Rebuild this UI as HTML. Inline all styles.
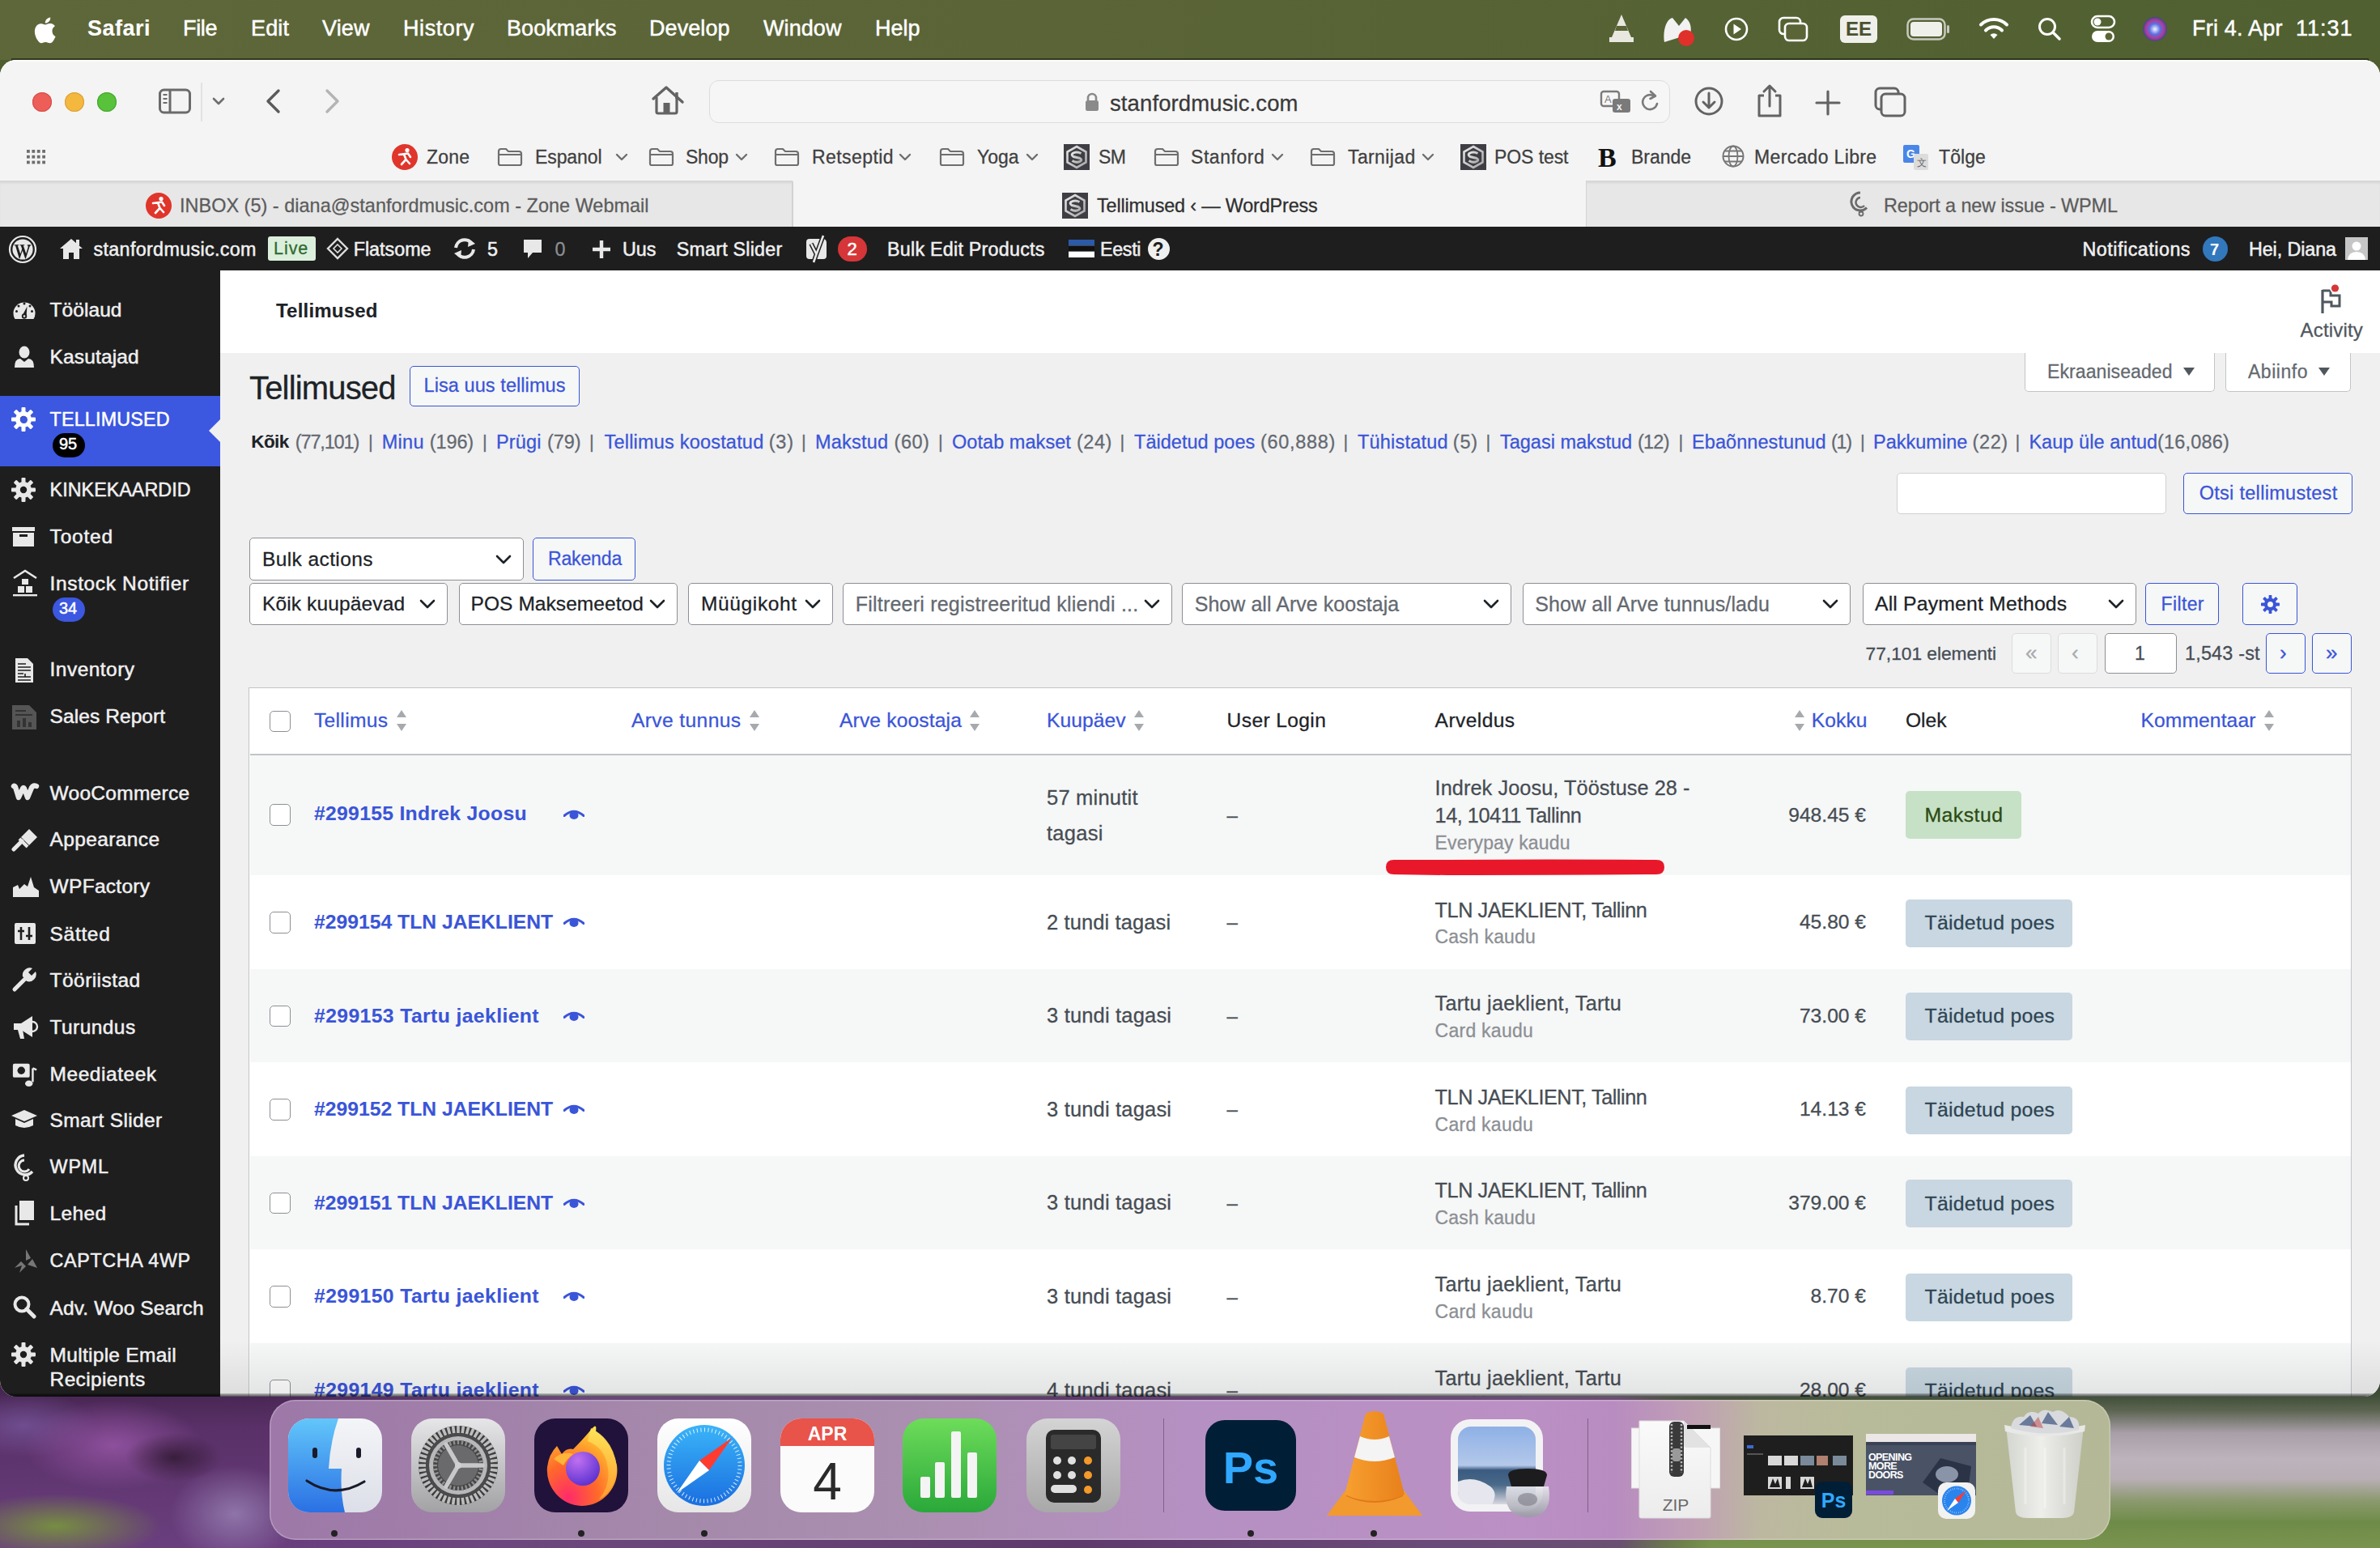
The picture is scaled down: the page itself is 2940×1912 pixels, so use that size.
<!DOCTYPE html><html><head><meta charset="utf-8"><style>
html,body{margin:0;padding:0;width:2940px;height:1912px;overflow:hidden;background:#000}
.r{position:absolute;display:block}
.t{position:absolute;white-space:nowrap;line-height:1;font-family:"Liberation Sans",sans-serif;-webkit-text-stroke:0.28px currentColor}
#root{position:relative;width:2940px;height:1912px;overflow:hidden}
</style></head><body><div id="root">
<div class="r" style="left:0.0px;top:0.0px;width:2940.0px;height:1912.0px;background:#4f5d2e"></div>
<div class="r" style="left:0.0px;top:1690.0px;width:2940.0px;height:222.0px;background:linear-gradient(90deg,#5c3468 0%,#6a3f7c 8%,#6e4a80 20%,#5e3a6c 45%,#6a4a78 60%,#6a4f72 68%,#5a5a4a 71%,#4d6a3a 74%,#557540 100%)"></div>
<div class="r" style="left:0.0px;top:1700.0px;width:720.0px;height:212.0px;background:radial-gradient(ellipse 60px 30px at 215px 100px,rgba(40,20,40,0.75) 0%,rgba(40,20,40,0) 100%),radial-gradient(ellipse 110px 55px at 140px 85px,rgba(150,85,165,0.85) 0%,rgba(110,60,125,0) 100%),radial-gradient(ellipse 130px 40px at 70px 185px,rgba(120,150,60,0.9) 0%,rgba(125,154,58,0) 100%),radial-gradient(ellipse 80px 60px at 290px 170px,rgba(160,140,190,0.7) 0%,rgba(138,120,168,0) 100%),radial-gradient(ellipse 90px 40px at 30px 60px,rgba(120,90,160,0.7) 0%,rgba(120,90,160,0) 100%),linear-gradient(180deg,#3e2248 0%,#5a3068 30%,#6a3f7e 100%);-webkit-mask-image:linear-gradient(90deg,#000 45%,transparent 100%);mask-image:linear-gradient(90deg,#000 45%,transparent 100%)"></div>
<div class="r" style="left:2000.0px;top:1700.0px;width:940.0px;height:212.0px;background:linear-gradient(180deg,#34402a 0%,#42503a 12%,#5d6552 20%,#a89fa8 33%,#bdb3bd 48%,#b8aeb4 60%,#8d9a70 72%,#6e8b48 85%,#7a944e 100%);-webkit-mask-image:linear-gradient(90deg,transparent 0%,#000 12%);mask-image:linear-gradient(90deg,transparent 0%,#000 12%)"></div>
<div class="r" style="left:0.0px;top:0.0px;width:2940.0px;height:74.0px;background:linear-gradient(90deg,#5e6739 0%,#5a6437 45%,#506030 100%)"></div>
<svg class="r" style="left:40.0px;top:20.0px;" width="30" height="34" viewBox="0 0 30 34"><path fill="#fff" d="M24.5 18.2c0-4 3.3-5.9 3.4-6-1.9-2.7-4.8-3.1-5.8-3.1-2.5-.3-4.8 1.4-6.1 1.4-1.3 0-3.2-1.4-5.2-1.3-2.7 0-5.2 1.6-6.6 4-2.8 4.9-.7 12.1 2 16.1 1.3 1.9 2.9 4.1 5 4 2-.1 2.8-1.3 5.2-1.3s3.1 1.3 5.2 1.3c2.2 0 3.5-2 4.8-3.9 1.5-2.2 2.1-4.3 2.2-4.4-.1 0-4.1-1.6-4.1-6.8zM20.6 6.4c1.1-1.3 1.9-3.2 1.6-5-1.6.1-3.5 1.1-4.7 2.4-1 1.1-1.9 3-1.7 4.8 1.8.1 3.6-.9 4.8-2.2z"/></svg>
<div class="t" style="left:108.0px;top:21.8px;font-size:27px;color:#fff;font-weight:700;-webkit-text-stroke:0.1px currentColor;letter-spacing:0.49px;">Safari</div>
<div class="t" style="left:226.0px;top:21.8px;font-size:27px;color:#fff;-webkit-text-stroke:0.5px currentColor;letter-spacing:-0.34px;">File</div>
<div class="t" style="left:310.0px;top:21.8px;font-size:27px;color:#fff;-webkit-text-stroke:0.5px currentColor;letter-spacing:0.16px;">Edit</div>
<div class="t" style="left:398.0px;top:21.8px;font-size:27px;color:#fff;-webkit-text-stroke:0.5px currentColor;letter-spacing:0.15px;">View</div>
<div class="t" style="left:498.0px;top:21.8px;font-size:27px;color:#fff;-webkit-text-stroke:0.5px currentColor;letter-spacing:0.58px;">History</div>
<div class="t" style="left:626.0px;top:21.8px;font-size:27px;color:#fff;-webkit-text-stroke:0.5px currentColor;letter-spacing:0.06px;">Bookmarks</div>
<div class="t" style="left:802.0px;top:21.8px;font-size:27px;color:#fff;-webkit-text-stroke:0.5px currentColor;letter-spacing:0.07px;">Develop</div>
<div class="t" style="left:943.0px;top:21.8px;font-size:27px;color:#fff;-webkit-text-stroke:0.5px currentColor;letter-spacing:0.09px;">Window</div>
<div class="t" style="left:1081.0px;top:21.8px;font-size:27px;color:#fff;-webkit-text-stroke:0.5px currentColor;letter-spacing:-0.01px;">Help</div>
<div class="t" style="left:2708.0px;top:21.8px;font-size:27px;color:#fff;-webkit-text-stroke:0.5px currentColor;letter-spacing:0.22px;">Fri 4. Apr</div>
<div class="t" style="left:2836.0px;top:21.8px;font-size:27px;color:#fff;-webkit-text-stroke:0.5px currentColor;letter-spacing:0.98px;">11:31</div>
<svg class="r" style="left:1986.0px;top:16.0px;" width="34" height="38" viewBox="0 0 34 38"><path d="M17 2 L5 30 L29 30 Z" fill="#e8e8e0"/><path d="M11 16h12l2 6H9z" fill="#5a6437"/><path d="M2 30h30v6H2z" fill="#e8e8e0"/></svg>
<svg class="r" style="left:2052.0px;top:18.0px;" width="44" height="40" viewBox="0 0 44 40"><path d="M4 34 C2 20 6 6 14 4 L22 14 L30 4 C36 8 38 16 36 24 Z" fill="#f2f2f2"/><circle cx="31" cy="29" r="10" fill="#e0302a"/></svg>
<svg class="r" style="left:2129.0px;top:20.0px;" width="32" height="32" viewBox="0 0 32 32"><circle cx="16" cy="16" r="13" fill="none" stroke="#fff" stroke-width="2.6"/><path d="M12.5 9.5 L22 16 L12.5 22.5Z" fill="#fff"/></svg>
<svg class="r" style="left:2196.0px;top:20.0px;" width="38" height="32" viewBox="0 0 38 32"><rect x="2" y="2" width="26" height="20" rx="5" fill="none" stroke="#fff" stroke-width="2.6"/><rect x="9" y="9" width="27" height="21" rx="5" fill="#5a6437" stroke="#fff" stroke-width="2.6"/></svg>
<div class="r" style="left:2273.0px;top:19.0px;width:46.0px;height:34.0px;background:#f0f0ea;border-radius:6px"></div>
<div class="t" style="left:2280.0px;top:24.2px;font-size:24px;color:#4a5230;font-weight:700;-webkit-text-stroke:0.1px currentColor;">EE</div>
<svg class="r" style="left:2355.0px;top:22.0px;" width="54" height="28" viewBox="0 0 54 28"><rect x="1.5" y="1.5" width="46" height="25" rx="7" fill="none" stroke="#c8c8c0" stroke-width="2.5"/><rect x="5" y="5" width="39" height="18" rx="4" fill="#f0f0ea"/><rect x="50" y="9" width="3" height="10" rx="1.5" fill="#c8c8c0"/></svg>
<svg class="r" style="left:2444.0px;top:20.0px;" width="38" height="32" viewBox="0 0 38 32"><path d="M19 28 l-4.5-5 a7 7 0 0 1 9 0z" fill="#fff"/><path d="M9 17.5 a14 14 0 0 1 20 0" fill="none" stroke="#fff" stroke-width="4" stroke-linecap="round"/><path d="M3 10.5 a23 23 0 0 1 32 0" fill="none" stroke="#fff" stroke-width="4" stroke-linecap="round"/></svg>
<svg class="r" style="left:2517.0px;top:20.0px;" width="30" height="32" viewBox="0 0 30 32"><circle cx="12" cy="13" r="9.5" fill="none" stroke="#fff" stroke-width="3"/><path d="M19 20 L27 28" stroke="#fff" stroke-width="3.4" stroke-linecap="round"/></svg>
<svg class="r" style="left:2582.0px;top:18.0px;" width="32" height="36" viewBox="0 0 32 36"><rect x="2" y="2" width="28" height="14" rx="7" fill="none" stroke="#fff" stroke-width="2.6"/><circle cx="9" cy="9" r="4.5" fill="#fff"/><rect x="2" y="20" width="28" height="14" rx="7" fill="#fff"/><circle cx="23" cy="27" r="4.5" fill="#5a6437"/></svg>
<svg class="r" style="left:2646.0px;top:20.0px;" width="32" height="32" viewBox="0 0 32 32"><defs><radialGradient id="siri" cx="50%" cy="50%" r="50%"><stop offset="0" stop-color="#f5f5ff"/><stop offset=".45" stop-color="#5a6fe0"/><stop offset=".75" stop-color="#b03a9a"/><stop offset="1" stop-color="#3a4a8a"/></radialGradient></defs><circle cx="16" cy="16" r="15" fill="url(#siri)"/></svg>
<div class="r" style="left:0;top:74px;width:2940px;height:1651px;border-radius:20px;overflow:hidden;background:#f0f0f1">
</div>
<div class="r" style="left:14.0px;top:72.0px;width:2912.0px;height:2.5px;background:rgba(15,20,8,0.55)"></div>
<div class="r" style="left:0;top:0;width:2940px;height:1912px;clip-path:inset(74px 0px 187px 0px round 20px);">
<div class="r" style="left:0.0px;top:74.0px;width:2940.0px;height:1651.0px;background:#f0f0f1"></div>
<div class="r" style="left:0.0px;top:74.0px;width:2940.0px;height:150.0px;background:#f4f4f4"></div>
<div class="r" style="left:0.0px;top:74.0px;width:2940.0px;height:2.0px;background:#fbfbfb"></div>
<div class="r" style="left:0.0px;top:223.0px;width:979.0px;height:1.2px;background:#d6d6d6"></div>
<div class="r" style="left:1959.0px;top:223.0px;width:981.0px;height:1.2px;background:#d6d6d6"></div>
<div class="r" style="left:40px;top:114px;width:24px;height:24px;border-radius:50%;background:#ee5e58;box-shadow:inset 0 0 0 1.2px #d8504a"></div>
<div class="r" style="left:80px;top:114px;width:24px;height:24px;border-radius:50%;background:#f5b83f;box-shadow:inset 0 0 0 1.2px #dba23a"></div>
<div class="r" style="left:120px;top:114px;width:24px;height:24px;border-radius:50%;background:#57c23a;box-shadow:inset 0 0 0 1.2px #4aa832"></div>
<svg class="r" style="left:195.0px;top:108.0px;" width="42" height="34" viewBox="0 0 42 34"><rect x="2.5" y="3" width="37" height="28" rx="5" fill="none" stroke="#6a6a6a" stroke-width="3"/><path d="M15 3v28" stroke="#6a6a6a" stroke-width="3"/><path d="M6.5 9h5M6.5 14h5M6.5 19h5" stroke="#6a6a6a" stroke-width="2.2"/></svg>
<div class="r" style="left:248.0px;top:102.0px;width:1.5px;height:48.0px;background:#e2e2e2"></div>
<svg class="r" style="left:261.0px;top:118.0px;" width="18" height="14" viewBox="0 0 18 14"><path d="M3 4 L9 10 L15 4" fill="none" stroke="#6e6e6e" stroke-width="2.6" stroke-linecap="round" stroke-linejoin="round"/></svg>
<svg class="r" style="left:324.0px;top:108.0px;" width="28" height="34" viewBox="0 0 28 34"><path d="M20 4 L7 17 L20 30" fill="none" stroke="#5a5a5a" stroke-width="3.4" stroke-linecap="round" stroke-linejoin="round"/></svg>
<svg class="r" style="left:396.0px;top:108.0px;" width="28" height="34" viewBox="0 0 28 34"><path d="M8 4 L21 17 L8 30" fill="none" stroke="#b4b4b4" stroke-width="3.4" stroke-linecap="round" stroke-linejoin="round"/></svg>
<svg class="r" style="left:803.0px;top:104.0px;" width="44" height="40" viewBox="0 0 44 40"><path d="M4 18 L20 4 L40 22" fill="none" stroke="#636363" stroke-width="3.4" stroke-linecap="round" stroke-linejoin="round"/><path d="M8 16 V34 Q8 36 10 36 H31 Q33 36 33 34 V16" fill="none" stroke="#636363" stroke-width="3.2"/><rect x="16.5" y="23" width="8" height="13" fill="#636363"/><path d="M33 10 V18" stroke="#636363" stroke-width="3.4"/></svg>
<div class="r" style="left:876.0px;top:99.0px;width:1187.0px;height:53.0px;border:1.5px solid #dcdcdc;border-radius:12px;box-sizing:border-box;background:#f6f6f6"></div>
<svg class="r" style="left:1339.0px;top:113.0px;" width="20" height="26" viewBox="0 0 20 26"><path d="M5 11 V8 a5 5 0 0 1 10 0 V11" fill="none" stroke="#8a8a8a" stroke-width="2.6"/><rect x="2" y="11" width="16" height="13" rx="2.5" fill="#8a8a8a"/></svg>
<div class="t" style="left:1371.0px;top:113.5px;font-size:27.5px;color:#3a3a3a;letter-spacing:0.11px;">stanfordmusic.com</div>
<svg class="r" style="left:1976.0px;top:110.0px;" width="42" height="34" viewBox="0 0 42 34"><rect x="2" y="3" width="22" height="18" rx="3" fill="none" stroke="#7a7a7a" stroke-width="2.4"/><text x="6" y="17" font-size="13" font-family="Liberation Sans" fill="#7a7a7a">A</text><rect x="16" y="12" width="22" height="17" rx="3" fill="#7a7a7a"/><text x="21" y="26" font-size="12" font-family="Liberation Sans" font-weight="700" fill="#f6f6f6">x</text></svg>
<svg class="r" style="left:2025.0px;top:110.0px;" width="28" height="32" viewBox="0 0 28 32"><path d="M22 18 a9 9 0 1 1 -4-9.5" fill="none" stroke="#7a7a7a" stroke-width="2.6" stroke-linecap="round"/><path d="M14 3 L20 8.5 L13.5 12" fill="none" stroke="#7a7a7a" stroke-width="2.6" stroke-linecap="round" stroke-linejoin="round"/></svg>
<svg class="r" style="left:2092.0px;top:106.0px;" width="38" height="38" viewBox="0 0 38 38"><circle cx="19" cy="19" r="16" fill="none" stroke="#636363" stroke-width="3"/><path d="M19 9 V27 M12 20 L19 27 L26 20" fill="none" stroke="#636363" stroke-width="3" stroke-linecap="round" stroke-linejoin="round"/></svg>
<svg class="r" style="left:2168.0px;top:102.0px;" width="36" height="44" viewBox="0 0 36 44"><path d="M11 16 H5 V41 H31 V16 H25" fill="none" stroke="#636363" stroke-width="3" stroke-linejoin="round"/><path d="M18 29 V4 M11 11 L18 4 L25 11" fill="none" stroke="#636363" stroke-width="3" stroke-linecap="round" stroke-linejoin="round"/></svg>
<svg class="r" style="left:2241.0px;top:110.0px;" width="34" height="34" viewBox="0 0 34 34"><path d="M17 3 V31 M3 17 H31" stroke="#636363" stroke-width="3.2" stroke-linecap="round"/></svg>
<svg class="r" style="left:2314.0px;top:106.0px;" width="42" height="40" viewBox="0 0 42 40"><rect x="3" y="3" width="28" height="26" rx="5" fill="none" stroke="#636363" stroke-width="3"/><rect x="10" y="10" width="29" height="27" rx="5" fill="#f4f4f4" stroke="#636363" stroke-width="3"/></svg>
<svg class="r" style="left:31.0px;top:184.0px;" width="28" height="22" viewBox="0 0 28 22"><g fill="#6e6e6e"><rect x="2.0" y="1.0" width="3.8" height="3.8"/><rect x="2.0" y="7.8" width="3.8" height="3.8"/><rect x="2.0" y="14.6" width="3.8" height="3.8"/><rect x="8.4" y="1.0" width="3.8" height="3.8"/><rect x="8.4" y="7.8" width="3.8" height="3.8"/><rect x="8.4" y="14.6" width="3.8" height="3.8"/><rect x="14.8" y="1.0" width="3.8" height="3.8"/><rect x="14.8" y="7.8" width="3.8" height="3.8"/><rect x="14.8" y="14.6" width="3.8" height="3.8"/><rect x="21.2" y="1.0" width="3.8" height="3.8"/><rect x="21.2" y="7.8" width="3.8" height="3.8"/><rect x="21.2" y="14.6" width="3.8" height="3.8"/></g></svg>
<svg class="r" style="left:484.0px;top:178.0px;" width="32" height="32" viewBox="0 0 32 32"><circle cx="16" cy="16" r="16" fill="#e0352b"/><circle cx="19" cy="7.5" r="2.6" fill="#fff"/><path d="M9 13 L20 11.5 L23 16 M15 12.5 L17.5 19 L12 25 M17.5 19 L22 24" fill="none" stroke="#fff" stroke-width="2.6" stroke-linecap="round" stroke-linejoin="round"/></svg>
<div class="t" style="left:527.0px;top:182.7px;font-size:23px;color:#404040;letter-spacing:0.22px;">Zone</div>
<svg class="r" style="left:614.0px;top:182.0px;" width="32" height="24" viewBox="0 0 32 24"><path d="M2 5 Q2 2 5 2 H11 L14 5 H27 Q30 5 30 8 V20 Q30 22 28 22 H4 Q2 22 2 20 Z" fill="none" stroke="#6e6e6e" stroke-width="2.2"/><path d="M2 9 H30" stroke="#6e6e6e" stroke-width="2"/></svg>
<div class="t" style="left:661.0px;top:182.7px;font-size:23px;color:#404040;letter-spacing:-0.10px;">Espanol</div>
<svg class="r" style="left:760.0px;top:188.0px;" width="16" height="12" viewBox="0 0 16 12"><path d="M2 3 L8 9 L14 3" fill="none" stroke="#6e6e6e" stroke-width="2.4" stroke-linecap="round" stroke-linejoin="round"/></svg>
<svg class="r" style="left:801.0px;top:182.0px;" width="32" height="24" viewBox="0 0 32 24"><path d="M2 5 Q2 2 5 2 H11 L14 5 H27 Q30 5 30 8 V20 Q30 22 28 22 H4 Q2 22 2 20 Z" fill="none" stroke="#6e6e6e" stroke-width="2.2"/><path d="M2 9 H30" stroke="#6e6e6e" stroke-width="2"/></svg>
<div class="t" style="left:847.0px;top:182.7px;font-size:23px;color:#404040;letter-spacing:-0.24px;">Shop</div>
<svg class="r" style="left:908.0px;top:188.0px;" width="16" height="12" viewBox="0 0 16 12"><path d="M2 3 L8 9 L14 3" fill="none" stroke="#6e6e6e" stroke-width="2.4" stroke-linecap="round" stroke-linejoin="round"/></svg>
<svg class="r" style="left:956.0px;top:182.0px;" width="32" height="24" viewBox="0 0 32 24"><path d="M2 5 Q2 2 5 2 H11 L14 5 H27 Q30 5 30 8 V20 Q30 22 28 22 H4 Q2 22 2 20 Z" fill="none" stroke="#6e6e6e" stroke-width="2.2"/><path d="M2 9 H30" stroke="#6e6e6e" stroke-width="2"/></svg>
<div class="t" style="left:1003.0px;top:182.7px;font-size:23px;color:#404040;letter-spacing:0.42px;">Retseptid</div>
<svg class="r" style="left:1110.0px;top:188.0px;" width="16" height="12" viewBox="0 0 16 12"><path d="M2 3 L8 9 L14 3" fill="none" stroke="#6e6e6e" stroke-width="2.4" stroke-linecap="round" stroke-linejoin="round"/></svg>
<svg class="r" style="left:1160.0px;top:182.0px;" width="32" height="24" viewBox="0 0 32 24"><path d="M2 5 Q2 2 5 2 H11 L14 5 H27 Q30 5 30 8 V20 Q30 22 28 22 H4 Q2 22 2 20 Z" fill="none" stroke="#6e6e6e" stroke-width="2.2"/><path d="M2 9 H30" stroke="#6e6e6e" stroke-width="2"/></svg>
<div class="t" style="left:1207.0px;top:182.7px;font-size:23px;color:#404040;letter-spacing:-0.04px;">Yoga</div>
<svg class="r" style="left:1267.0px;top:188.0px;" width="16" height="12" viewBox="0 0 16 12"><path d="M2 3 L8 9 L14 3" fill="none" stroke="#6e6e6e" stroke-width="2.4" stroke-linecap="round" stroke-linejoin="round"/></svg>
<svg class="r" style="left:1425.0px;top:182.0px;" width="32" height="24" viewBox="0 0 32 24"><path d="M2 5 Q2 2 5 2 H11 L14 5 H27 Q30 5 30 8 V20 Q30 22 28 22 H4 Q2 22 2 20 Z" fill="none" stroke="#6e6e6e" stroke-width="2.2"/><path d="M2 9 H30" stroke="#6e6e6e" stroke-width="2"/></svg>
<div class="t" style="left:1471.0px;top:182.7px;font-size:23px;color:#404040;letter-spacing:0.56px;">Stanford</div>
<svg class="r" style="left:1570.0px;top:188.0px;" width="16" height="12" viewBox="0 0 16 12"><path d="M2 3 L8 9 L14 3" fill="none" stroke="#6e6e6e" stroke-width="2.4" stroke-linecap="round" stroke-linejoin="round"/></svg>
<svg class="r" style="left:1618.0px;top:182.0px;" width="32" height="24" viewBox="0 0 32 24"><path d="M2 5 Q2 2 5 2 H11 L14 5 H27 Q30 5 30 8 V20 Q30 22 28 22 H4 Q2 22 2 20 Z" fill="none" stroke="#6e6e6e" stroke-width="2.2"/><path d="M2 9 H30" stroke="#6e6e6e" stroke-width="2"/></svg>
<div class="t" style="left:1665.0px;top:182.7px;font-size:23px;color:#404040;letter-spacing:0.39px;">Tarnijad</div>
<svg class="r" style="left:1756.0px;top:188.0px;" width="16" height="12" viewBox="0 0 16 12"><path d="M2 3 L8 9 L14 3" fill="none" stroke="#6e6e6e" stroke-width="2.4" stroke-linecap="round" stroke-linejoin="round"/></svg>
<svg class="r" style="left:1314.0px;top:178.0px;" width="32" height="32" viewBox="0 0 32 32"><defs><linearGradient id="smg" x1="0" y1="0" x2="1" y2="1"><stop offset="0" stop-color="#e8e8e8"/><stop offset="1" stop-color="#a8a8a8"/></linearGradient></defs><rect width="32" height="32" fill="#3e3e44"/><path d="M16 3 L27.5 9.5 V22.5 L16 29 L4.5 22.5 V9.5 Z" fill="none" stroke="url(#smg)" stroke-width="2.6"/><path d="M21.5 11.5 Q16 8.5 11 11.5 Q9 13.5 12 15.5 L20 17.5 Q23 19 21 21 Q16 24 10.5 20.5" fill="none" stroke="url(#smg)" stroke-width="3"/></svg>
<div class="t" style="left:1357.0px;top:182.7px;font-size:23px;color:#404040;letter-spacing:-0.70px;">SM</div>
<svg class="r" style="left:1804.0px;top:178.0px;" width="32" height="32" viewBox="0 0 32 32"><defs><linearGradient id="smg" x1="0" y1="0" x2="1" y2="1"><stop offset="0" stop-color="#e8e8e8"/><stop offset="1" stop-color="#a8a8a8"/></linearGradient></defs><rect width="32" height="32" fill="#3e3e44"/><path d="M16 3 L27.5 9.5 V22.5 L16 29 L4.5 22.5 V9.5 Z" fill="none" stroke="url(#smg)" stroke-width="2.6"/><path d="M21.5 11.5 Q16 8.5 11 11.5 Q9 13.5 12 15.5 L20 17.5 Q23 19 21 21 Q16 24 10.5 20.5" fill="none" stroke="url(#smg)" stroke-width="3"/></svg>
<div class="t" style="left:1846.0px;top:182.7px;font-size:23px;color:#404040;letter-spacing:-0.08px;">POS test</div>
<div class="t" style="left:1974.0px;top:178.3px;font-size:34px;color:#111;font-weight:700;-webkit-text-stroke:0.1px currentColor;font-family:'Liberation Serif';">B</div>
<div class="t" style="left:2015.0px;top:182.7px;font-size:23px;color:#404040;letter-spacing:-0.03px;">Brande</div>
<svg class="r" style="left:2126.0px;top:178.0px;" width="30" height="30" viewBox="0 0 30 30"><circle cx="15" cy="15" r="12.5" fill="none" stroke="#777" stroke-width="2"/><ellipse cx="15" cy="15" rx="5.5" ry="12.5" fill="none" stroke="#777" stroke-width="1.8"/><path d="M2.5 15H27.5M5 8.5H25M5 21.5H25" stroke="#777" stroke-width="1.8"/></svg>
<div class="t" style="left:2167.0px;top:182.7px;font-size:23px;color:#404040;letter-spacing:0.34px;">Mercado Libre</div>
<svg class="r" style="left:2350.0px;top:178.0px;" width="36" height="34" viewBox="0 0 36 34"><rect x="1" y="1" width="20" height="22" rx="2" fill="#4a86e8"/><text x="5" y="17" font-size="14" font-family="Liberation Sans" font-weight="700" fill="#fff">G</text><rect x="14" y="12" width="18" height="20" rx="2" fill="#dcdcdc"/><text x="18" y="27" font-size="12" font-family="Liberation Sans" fill="#666">文</text></svg>
<div class="t" style="left:2395.0px;top:182.7px;font-size:23px;color:#404040;letter-spacing:0.09px;">Tõlge</div>
<div class="r" style="left:0.0px;top:224.0px;width:2940.0px;height:56.0px;background:#e4e4e4"></div>
<div class="r" style="left:0.0px;top:224.0px;width:979.0px;height:56.0px;background:#e7e7e7;box-shadow:inset 0 3px 3px -1px rgba(0,0,0,0.08)"></div>
<div class="r" style="left:979.0px;top:224.0px;width:980.0px;height:56.0px;background:#f4f4f4"></div>
<div class="r" style="left:1959.0px;top:224.0px;width:981.0px;height:56.0px;background:#e7e7e7;box-shadow:inset 0 3px 3px -1px rgba(0,0,0,0.08)"></div>
<div class="r" style="left:978.0px;top:224.0px;width:1.5px;height:56.0px;background:#d2d2d2"></div>
<div class="r" style="left:1958.5px;top:224.0px;width:1.5px;height:56.0px;background:#d2d2d2"></div>
<svg class="r" style="left:180.0px;top:238.0px;" width="32" height="32" viewBox="0 0 32 32"><circle cx="16" cy="16" r="16" fill="#e0352b"/><circle cx="19" cy="7.5" r="2.6" fill="#fff"/><path d="M9 13 L20 11.5 L23 16 M15 12.5 L17.5 19 L12 25 M17.5 19 L22 24" fill="none" stroke="#fff" stroke-width="2.6" stroke-linecap="round" stroke-linejoin="round"/></svg>
<div class="t" style="left:222.0px;top:242.5px;font-size:23.4px;color:#5c5c5c;letter-spacing:0.05px;">INBOX (5) - diana@stanfordmusic.com - Zone Webmail</div>
<svg class="r" style="left:1312.0px;top:238.0px;" width="32" height="32" viewBox="0 0 32 32"><defs><linearGradient id="smg" x1="0" y1="0" x2="1" y2="1"><stop offset="0" stop-color="#e8e8e8"/><stop offset="1" stop-color="#a8a8a8"/></linearGradient></defs><rect width="32" height="32" fill="#3e3e44"/><path d="M16 3 L27.5 9.5 V22.5 L16 29 L4.5 22.5 V9.5 Z" fill="none" stroke="url(#smg)" stroke-width="2.6"/><path d="M21.5 11.5 Q16 8.5 11 11.5 Q9 13.5 12 15.5 L20 17.5 Q23 19 21 21 Q16 24 10.5 20.5" fill="none" stroke="url(#smg)" stroke-width="3"/></svg>
<div class="t" style="left:1355.0px;top:242.5px;font-size:23.4px;color:#2f2f2f;letter-spacing:-0.16px;">Tellimused ‹ — WordPress</div>
<svg class="r" style="left:2285.0px;top:236.0px;" width="26" height="32" viewBox="0 0 26 32"><path d="M13 2 a11 11 0 1 0 8 18.5" fill="none" stroke="#6a6a6a" stroke-width="3"/><path d="M13 8 a6 6 0 1 0 5 10" fill="none" stroke="#6a6a6a" stroke-width="2.5"/><circle cx="14" cy="28" r="2.5" fill="none" stroke="#6a6a6a" stroke-width="1.8"/></svg>
<div class="t" style="left:2327.0px;top:242.5px;font-size:23.4px;color:#5c5c5c;letter-spacing:-0.09px;">Report a new issue - WPML</div>
<div class="r" style="left:0.0px;top:280.0px;width:2940.0px;height:54.0px;background:#1e1e1e"></div>
<svg class="r" style="left:10.0px;top:290.0px;" width="36" height="36" viewBox="0 0 36 36"><circle cx="18" cy="18" r="16" fill="none" stroke="#e8e8e8" stroke-width="2.2"/><circle cx="18" cy="18" r="12.6" fill="#e8e8e8"/><path d="M7.5 12.2 H13.2 V13.2 H11.8 L15.2 23.5 L17.2 17.5 L15.8 13.2 H14.6 V12.2 H20.2 V13.2 H18.8 L22.2 23.2 L24.6 15.5 Q25.2 13.2 23.8 13.2 V12.2 H28.2 V13.2 Q27 13.2 26.4 15 L21.8 29.6 H21.2 L17.8 19.6 L14.4 29.6 H13.8 L9 13.2 H7.5 Z" fill="#1e1e1e"/></svg>
<svg class="r" style="left:72.0px;top:292.0px;" width="32" height="30" viewBox="0 0 32 30"><path d="M16 3 L2 15 H6 V28 H13 V20 H19 V28 H26 V15 H30 Z" fill="#e8e8e8"/><rect x="22" y="4" width="4" height="7" fill="#e8e8e8"/></svg>
<div class="t" style="left:115.5px;top:297.1px;font-size:23.3px;color:#f0f0f1;-webkit-text-stroke:0.5px currentColor;letter-spacing:0.34px;">stanfordmusic.com</div>
<div class="r" style="left:330.5px;top:291.5px;width:59.5px;height:30.0px;background:#dcefdc;border-radius:3px"></div>
<div class="t" style="left:338.0px;top:296.5px;font-size:21.5px;color:#2e6b30;letter-spacing:0.95px;">Live</div>
<svg class="r" style="left:403.0px;top:293.0px;" width="28" height="28" viewBox="0 0 28 28"><path d="M14 2 L26 14 L14 26 L2 14 Z" fill="none" stroke="#ddd" stroke-width="2.4"/><path d="M14 9 L19 14 L14 19 L9 14 Z" fill="none" stroke="#ddd" stroke-width="1.6"/></svg>
<div class="t" style="left:436.7px;top:297.1px;font-size:23.3px;color:#f0f0f1;-webkit-text-stroke:0.5px currentColor;letter-spacing:-0.00px;">Flatsome</div>
<svg class="r" style="left:557.0px;top:292.0px;" width="34" height="30" viewBox="0 0 34 30"><path d="M6 14 a11 11 0 0 1 20-5" fill="none" stroke="#e8e8e8" stroke-width="4"/><path d="M22 3 L30 9 L21 13Z" fill="#e8e8e8"/><path d="M28 16 a11 11 0 0 1 -20 5" fill="none" stroke="#e8e8e8" stroke-width="4"/><path d="M12 27 L4 21 L13 17Z" fill="#e8e8e8"/></svg>
<div class="t" style="left:602.0px;top:297.1px;font-size:23.3px;color:#f0f0f1;-webkit-text-stroke:0.5px currentColor;">5</div>
<svg class="r" style="left:644.0px;top:293.0px;" width="28" height="30" viewBox="0 0 28 30"><path d="M3 3 H25 V19 H14 L8 26 V19 H3 Z" fill="#e8e8e8" stroke-linejoin="round"/></svg>
<div class="t" style="left:685.6px;top:297.1px;font-size:23.3px;color:#8c8f94;">0</div>
<svg class="r" style="left:729.0px;top:295.0px;" width="28" height="26" viewBox="0 0 28 26"><path d="M14 2 V24 M3 13 H25" stroke="#e8e8e8" stroke-width="4.4"/></svg>
<div class="t" style="left:769.0px;top:297.1px;font-size:23.3px;color:#f0f0f1;-webkit-text-stroke:0.5px currentColor;letter-spacing:0.03px;">Uus</div>
<div class="t" style="left:835.7px;top:297.1px;font-size:23.3px;color:#f0f0f1;-webkit-text-stroke:0.5px currentColor;letter-spacing:0.21px;">Smart Slider</div>
<svg class="r" style="left:993.0px;top:289.0px;" width="32" height="40" viewBox="0 0 32 40"><path d="M3 10 Q3 6 7 6 H23 Q28 6 28 11 V27 Q28 31 24 31 H7 Q3 31 3 27 Z" fill="#e8e8e8"/><path d="M9 12 L15.5 25 L12 35 M15.5 25 L24 2" fill="none" stroke="#1e1e1e" stroke-width="5.5" stroke-linejoin="round"/><path d="M9 12 L15.5 25 L12 35 M15.5 25 L24 2" fill="none" stroke="#e8e8e8" stroke-width="2.6" stroke-linejoin="round"/></svg>
<div class="r" style="left:1035.0px;top:292.0px;width:36.0px;height:31.0px;background:#d63638;border-radius:16px"></div>
<div class="t" style="left:1046.5px;top:297.2px;font-size:22px;color:#fff;-webkit-text-stroke:0.5px currentColor;">2</div>
<div class="t" style="left:1096.0px;top:297.1px;font-size:23.3px;color:#f0f0f1;-webkit-text-stroke:0.5px currentColor;letter-spacing:0.24px;">Bulk Edit Products</div>
<svg class="r" style="left:1320.0px;top:296.0px;" width="32" height="22" viewBox="0 0 32 22"><rect width="32" height="22" fill="#fff"/><rect y="0" width="32" height="7.3" fill="#2a5aa8"/><rect y="7.3" width="32" height="7.3" fill="#111"/></svg>
<div class="t" style="left:1359.0px;top:297.1px;font-size:23.3px;color:#f0f0f1;-webkit-text-stroke:0.5px currentColor;letter-spacing:-0.32px;">Eesti</div>
<div class="r" style="left:1417.5px;top:294.0px;width:27.0px;height:27.0px;background:#f0f0f0;border-radius:50%"></div>
<div class="t" style="left:1423.5px;top:296.7px;font-size:23px;color:#1e1e1e;font-weight:700;-webkit-text-stroke:0.1px currentColor;">?</div>
<div class="t" style="left:2572.5px;top:297.1px;font-size:23.3px;color:#f0f0f1;-webkit-text-stroke:0.5px currentColor;letter-spacing:0.51px;">Notifications</div>
<div class="r" style="left:2721.0px;top:292.0px;width:31.0px;height:31.0px;background:#3278bd;border-radius:50%"></div>
<div class="t" style="left:2730.0px;top:298.2px;font-size:20px;color:#fff;font-weight:700;-webkit-text-stroke:0.1px currentColor;">7</div>
<div class="t" style="left:2778.0px;top:297.1px;font-size:23.3px;color:#f0f0f1;-webkit-text-stroke:0.5px currentColor;letter-spacing:-0.09px;">Hei, Diana</div>
<div class="r" style="left:2897.0px;top:293.0px;width:28.0px;height:28.0px;background:#c6c6c6"></div>
<svg class="r" style="left:2897.0px;top:293.0px;" width="28" height="28" viewBox="0 0 28 28"><circle cx="14" cy="11" r="5.5" fill="#fff"/><path d="M3 28 Q4 18 14 18 Q24 18 25 28Z" fill="#fff"/></svg>
<div class="r" style="left:0.0px;top:334.0px;width:272.0px;height:1391.0px;background:#1e1e1e"></div>
<div class="r" style="left:0.0px;top:489.0px;width:272.0px;height:87.0px;background:#3c57e0"></div>
<svg class="r" style="left:258.0px;top:518.0px;" width="14" height="28" viewBox="0 0 14 28"><path d="M14 0 L0 14 L14 28Z" fill="#f0f0f1"/></svg>
<div class="t" style="left:61.6px;top:371.0px;font-size:24.5px;color:#f0f0f1;-webkit-text-stroke:0.5px currentColor;letter-spacing:0.06px;">Töölaud</div>
<div class="t" style="left:61.6px;top:429.0px;font-size:24.5px;color:#f0f0f1;-webkit-text-stroke:0.5px currentColor;letter-spacing:0.14px;">Kasutajad</div>
<div class="t" style="left:61.6px;top:506.6px;font-size:23.3px;color:#fff;-webkit-text-stroke:0.5px currentColor;letter-spacing:0.18px;">TELLIMUSED</div>
<div class="t" style="left:61.6px;top:593.6px;font-size:23.3px;color:#f0f0f1;-webkit-text-stroke:0.5px currentColor;letter-spacing:0.04px;">KINKEKAARDID</div>
<div class="t" style="left:61.6px;top:651.4px;font-size:24.5px;color:#f0f0f1;-webkit-text-stroke:0.5px currentColor;letter-spacing:0.79px;">Tooted</div>
<div class="t" style="left:61.6px;top:708.6px;font-size:24.5px;color:#f0f0f1;-webkit-text-stroke:0.5px currentColor;letter-spacing:0.63px;">Instock Notifier</div>
<div class="t" style="left:61.6px;top:815.0px;font-size:24.5px;color:#f0f0f1;-webkit-text-stroke:0.5px currentColor;letter-spacing:0.46px;">Inventory</div>
<div class="t" style="left:61.6px;top:873.2px;font-size:24.5px;color:#f0f0f1;-webkit-text-stroke:0.5px currentColor;letter-spacing:0.08px;">Sales Report</div>
<div class="t" style="left:61.6px;top:968.0px;font-size:24.5px;color:#f0f0f1;-webkit-text-stroke:0.5px currentColor;letter-spacing:0.28px;">WooCommerce</div>
<div class="t" style="left:61.6px;top:1025.4px;font-size:24.5px;color:#f0f0f1;-webkit-text-stroke:0.5px currentColor;letter-spacing:0.37px;">Appearance</div>
<div class="t" style="left:61.6px;top:1083.4px;font-size:24.5px;color:#f0f0f1;-webkit-text-stroke:0.5px currentColor;letter-spacing:0.29px;">WPFactory</div>
<div class="t" style="left:61.6px;top:1141.5px;font-size:24.5px;color:#f0f0f1;-webkit-text-stroke:0.5px currentColor;letter-spacing:0.67px;">Sätted</div>
<div class="t" style="left:61.6px;top:1198.5px;font-size:24.5px;color:#f0f0f1;-webkit-text-stroke:0.5px currentColor;letter-spacing:0.44px;">Tööriistad</div>
<div class="t" style="left:61.6px;top:1256.6px;font-size:24.5px;color:#f0f0f1;-webkit-text-stroke:0.5px currentColor;letter-spacing:0.42px;">Turundus</div>
<div class="t" style="left:61.6px;top:1314.7px;font-size:24.5px;color:#f0f0f1;-webkit-text-stroke:0.5px currentColor;letter-spacing:0.54px;">Meediateek</div>
<div class="t" style="left:61.6px;top:1372.3px;font-size:24.5px;color:#f0f0f1;-webkit-text-stroke:0.5px currentColor;letter-spacing:0.34px;">Smart Slider</div>
<div class="t" style="left:61.6px;top:1429.9px;font-size:23.3px;color:#f0f0f1;-webkit-text-stroke:0.5px currentColor;letter-spacing:0.86px;">WPML</div>
<div class="t" style="left:61.6px;top:1487.3px;font-size:24.5px;color:#f0f0f1;-webkit-text-stroke:0.5px currentColor;letter-spacing:0.34px;">Lehed</div>
<div class="t" style="left:61.6px;top:1546.0px;font-size:23.3px;color:#f0f0f1;-webkit-text-stroke:0.5px currentColor;letter-spacing:0.65px;">CAPTCHA 4WP</div>
<div class="t" style="left:61.6px;top:1603.5px;font-size:24.5px;color:#f0f0f1;-webkit-text-stroke:0.5px currentColor;letter-spacing:0.11px;">Adv. Woo Search</div>
<div class="t" style="left:61.6px;top:1661.6px;font-size:24.5px;color:#f0f0f1;-webkit-text-stroke:0.5px currentColor;letter-spacing:0.28px;">Multiple Email</div>
<div class="t" style="left:61.6px;top:1691.5px;font-size:24.5px;color:#f0f0f1;-webkit-text-stroke:0.5px currentColor;letter-spacing:0.35px;">Recipients</div>
<div class="r" style="left:65.4px;top:534.5px;width:40.0px;height:30.0px;background:#000;border-radius:15px"></div>
<div class="t" style="left:73.0px;top:538.2px;font-size:20px;color:#fff;-webkit-text-stroke:0.5px currentColor;">95</div>
<div class="r" style="left:65.4px;top:737.5px;width:40.0px;height:30.0px;background:#3c57e0;border-radius:15px"></div>
<div class="t" style="left:73.0px;top:741.2px;font-size:20px;color:#fff;-webkit-text-stroke:0.5px currentColor;">34</div>
<svg class="r" style="left:16.0px;top:370.0px;" width="28" height="26" viewBox="0 0 28 26"><path d="M2.5 24 A13.5 13.5 0 1 1 25.5 24 Z" fill="#e8e8e8"/><g fill="#1e1e1e"><circle cx="14" cy="5" r="1.5"/><circle cx="7" cy="8" r="1.5"/><circle cx="21" cy="8" r="1.5"/><circle cx="4.5" cy="14.5" r="1.5"/><circle cx="23.5" cy="14.5" r="1.5"/><path d="M11.5 20 L17.5 8.5 L16.5 21Z"/><circle cx="14" cy="20.5" r="3.2"/></g><circle cx="14" cy="20.5" r="1.3" fill="#e8e8e8"/></svg>
<svg class="r" style="left:17.0px;top:427.0px;" width="26" height="28" viewBox="0 0 26 28"><ellipse cx="13" cy="8" rx="6.5" ry="7.5" fill="#e8e8e8"/><path d="M1 27 Q1 16 8 16 L13 20 L18 16 Q25 16 25 27Z" fill="#e8e8e8"/></svg>
<svg class="r" style="left:14.0px;top:503.0px;" width="30" height="30" viewBox="0 0 30 30"><g fill="#fff"><rect x="12.5" y="0" width="5" height="8" rx="1" transform="rotate(0 15 15)"/><rect x="12.5" y="0" width="5" height="8" rx="1" transform="rotate(45 15 15)"/><rect x="12.5" y="0" width="5" height="8" rx="1" transform="rotate(90 15 15)"/><rect x="12.5" y="0" width="5" height="8" rx="1" transform="rotate(135 15 15)"/><rect x="12.5" y="0" width="5" height="8" rx="1" transform="rotate(180 15 15)"/><rect x="12.5" y="0" width="5" height="8" rx="1" transform="rotate(225 15 15)"/><rect x="12.5" y="0" width="5" height="8" rx="1" transform="rotate(270 15 15)"/><rect x="12.5" y="0" width="5" height="8" rx="1" transform="rotate(315 15 15)"/><circle cx="15" cy="15" r="10"/></g><circle cx="15" cy="15" r="4.2" fill="#1e1e1e"/></svg>
<div class="r" style="left:24.5px;top:513.5px;width:9.0px;height:9.0px;background:#3c57e0;border-radius:50%"></div>
<svg class="r" style="left:14.0px;top:590.0px;" width="30" height="30" viewBox="0 0 30 30"><g fill="#e8e8e8"><rect x="12.5" y="0" width="5" height="8" rx="1" transform="rotate(0 15 15)"/><rect x="12.5" y="0" width="5" height="8" rx="1" transform="rotate(45 15 15)"/><rect x="12.5" y="0" width="5" height="8" rx="1" transform="rotate(90 15 15)"/><rect x="12.5" y="0" width="5" height="8" rx="1" transform="rotate(135 15 15)"/><rect x="12.5" y="0" width="5" height="8" rx="1" transform="rotate(180 15 15)"/><rect x="12.5" y="0" width="5" height="8" rx="1" transform="rotate(225 15 15)"/><rect x="12.5" y="0" width="5" height="8" rx="1" transform="rotate(270 15 15)"/><rect x="12.5" y="0" width="5" height="8" rx="1" transform="rotate(315 15 15)"/><circle cx="15" cy="15" r="10"/></g><circle cx="15" cy="15" r="4.2" fill="#1e1e1e"/></svg>
<svg class="r" style="left:14.0px;top:650.0px;" width="30" height="26" viewBox="0 0 30 26"><rect x="1" y="1" width="28" height="5" fill="#e8e8e8"/><rect x="2" y="8" width="26" height="17" fill="#e8e8e8"/><rect x="10" y="10" width="10" height="3" fill="#1e1e1e"/></svg>
<svg class="r" style="left:14.0px;top:702.0px;" width="34" height="36" viewBox="0 0 34 36"><path d="M3 12 L17 3 L31 12" fill="none" stroke="#e8e8e8" stroke-width="2.6"/><rect x="13" y="13" width="8" height="7" fill="#e8e8e8"/><rect x="8" y="22" width="8" height="8" fill="#e8e8e8"/><rect x="18" y="22" width="8" height="8" fill="#e8e8e8"/><rect x="2" y="32" width="30" height="2.4" fill="#e8e8e8"/></svg>
<svg class="r" style="left:18.0px;top:812.0px;" width="24" height="32" viewBox="0 0 24 32"><path d="M1 1 H16 L23 8 V31 H1Z" fill="#e8e8e8"/><g stroke="#1e1e1e" stroke-width="1.6"><path d="M4 8H14M4 12H20M4 16H20M4 20H11M4 24H20M4 28H20M13 20V24"/></g></svg>
<svg class="r" style="left:14.0px;top:870.0px;" width="32" height="32" viewBox="0 0 32 32"><path d="M1 1 H22 L31 10 V31 H1Z" fill="#555"/><g stroke="#333" stroke-width="2"><path d="M5 8H18M5 13H26"/></g><rect x="7" y="20" width="4" height="8" fill="#333"/><rect x="14" y="17" width="4" height="11" fill="#333"/><rect x="21" y="22" width="4" height="6" fill="#333"/></svg>
<svg class="r" style="left:13.0px;top:966.0px;" width="36" height="26" viewBox="0 0 36 26"><path d="M4 5 Q5 4 6 6 L10 19 L15 8 Q16 6 17 8 L21 19 L26 7 Q28 3 32 5" fill="none" stroke="#e8e8e8" stroke-width="6.4" stroke-linecap="round" stroke-linejoin="round"/></svg>
<svg class="r" style="left:14.0px;top:1022.0px;" width="34" height="30" viewBox="0 0 34 30"><path d="M3 27 L13 17" stroke="#e8e8e8" stroke-width="5" stroke-linecap="round"/><path d="M12 12 L22 2 L32 12 L22 22Z" fill="#e8e8e8"/><path d="M10 14 L20 24" stroke="#e8e8e8" stroke-width="4"/></svg>
<svg class="r" style="left:14.0px;top:1080.0px;" width="36" height="30" viewBox="0 0 36 30"><path d="M2 28 V16 L8 13 L10 18 L16 12 L20 15 L24 3 L28 16 L34 20 V28Z" fill="#e8e8e8"/></svg>
<svg class="r" style="left:17.0px;top:1139.0px;" width="28" height="28" viewBox="0 0 28 28"><rect x="1" y="1" width="26" height="26" rx="2" fill="#e8e8e8"/><path d="M9 6V22M5 11H13M19 6V22M15 17H23" stroke="#1e1e1e" stroke-width="2.6"/></svg>
<svg class="r" style="left:14.0px;top:1194.0px;" width="32" height="32" viewBox="0 0 32 32"><path d="M4 28 L16 16" stroke="#e8e8e8" stroke-width="5" stroke-linecap="round"/><path d="M14 12 a9 9 0 0 1 12-10 L21 7 L25 11 L30 6 a9 9 0 0 1 -11 12Z" fill="#e8e8e8"/></svg>
<svg class="r" style="left:14.0px;top:1252.0px;" width="34" height="34" viewBox="0 0 34 34"><path d="M3 12 H12 L26 3 V29 L12 20 H3Z" fill="#e8e8e8"/><path d="M8 20 L11 31 H16 L14 20" fill="#e8e8e8"/><circle cx="26" cy="16" r="6" fill="none" stroke="#e8e8e8" stroke-width="2.4"/></svg>
<svg class="r" style="left:14.0px;top:1309.0px;" width="34" height="36" viewBox="0 0 36 36"><rect x="2" y="4" width="22" height="18" rx="2" fill="#e8e8e8"/><circle cx="13" cy="13" r="5" fill="#1e1e1e"/><path d="M28 10 V28 M28 10 L33 12" stroke="#e8e8e8" stroke-width="2.6"/><ellipse cx="23" cy="30" rx="5" ry="4" fill="#e8e8e8"/></svg>
<svg class="r" style="left:12.0px;top:1368.0px;" width="36" height="30" viewBox="0 0 36 30"><path d="M2 10 L18 3 L34 10 L18 17Z" fill="#e8e8e8"/><path d="M7 14 V22 Q18 28 29 22 V14 L18 19Z" fill="#e8e8e8"/></svg>
<svg class="r" style="left:15.0px;top:1424.0px;" width="30" height="36" viewBox="0 0 30 36"><path d="M15 3 a12 12 0 1 0 10 20" fill="none" stroke="#e8e8e8" stroke-width="3.4"/><path d="M15 9 a7 7 0 1 0 6 11" fill="none" stroke="#e8e8e8" stroke-width="3"/><circle cx="17" cy="31" r="3" fill="none" stroke="#e8e8e8" stroke-width="2"/></svg>
<svg class="r" style="left:16.0px;top:1481.0px;" width="28" height="34" viewBox="0 0 28 34"><rect x="8" y="2" width="18" height="24" fill="#e8e8e8"/><path d="M4 8 V31 H20" fill="none" stroke="#e8e8e8" stroke-width="3"/></svg>
<svg class="r" style="left:14.0px;top:1540.0px;" width="36" height="34" viewBox="0 0 36 34"><path d="M18 3 L24 14 L18 17Z M4 26 L12 18 L16 22Z M32 26 L20 22 L26 15Z M10 32 L14 20 L18 24Z" fill="#777"/></svg>
<svg class="r" style="left:15.0px;top:1599.0px;" width="30" height="32" viewBox="0 0 30 32"><circle cx="12" cy="12" r="8.5" fill="none" stroke="#e8e8e8" stroke-width="4"/><path d="M18 18 L27 27" stroke="#e8e8e8" stroke-width="5" stroke-linecap="round"/></svg>
<svg class="r" style="left:14.0px;top:1658.0px;" width="30" height="30" viewBox="0 0 30 30"><g fill="#e8e8e8"><rect x="12.5" y="0" width="5" height="8" rx="1" transform="rotate(0 15 15)"/><rect x="12.5" y="0" width="5" height="8" rx="1" transform="rotate(45 15 15)"/><rect x="12.5" y="0" width="5" height="8" rx="1" transform="rotate(90 15 15)"/><rect x="12.5" y="0" width="5" height="8" rx="1" transform="rotate(135 15 15)"/><rect x="12.5" y="0" width="5" height="8" rx="1" transform="rotate(180 15 15)"/><rect x="12.5" y="0" width="5" height="8" rx="1" transform="rotate(225 15 15)"/><rect x="12.5" y="0" width="5" height="8" rx="1" transform="rotate(270 15 15)"/><rect x="12.5" y="0" width="5" height="8" rx="1" transform="rotate(315 15 15)"/><circle cx="15" cy="15" r="10"/></g><circle cx="15" cy="15" r="4.2" fill="#1e1e1e"/></svg>
<div class="r" style="left:272.0px;top:334.0px;width:2668.0px;height:102.0px;background:#fff"></div>
<div class="t" style="left:341.0px;top:372.2px;font-size:24px;color:#1d2327;font-weight:700;-webkit-text-stroke:0.1px currentColor;letter-spacing:0.21px;">Tellimused</div>
<svg class="r" style="left:2860.0px;top:346.0px;" width="40" height="46" viewBox="0 0 40 46"><path d="M9 12 V41" stroke="#50575e" stroke-width="3.2"/><path d="M9 13 H19 V19 H30 V32 H20 V27 H9" fill="none" stroke="#50575e" stroke-width="3" stroke-linejoin="miter"/><circle cx="24.5" cy="10" r="6.5" fill="#fff"/><circle cx="24.5" cy="10" r="4.6" fill="#d63638"/></svg>
<div class="t" style="left:2841.6px;top:395.8px;font-size:24px;color:#50575e;letter-spacing:0.17px;">Activity</div>
<div class="r" style="left:2501.0px;top:436.0px;width:235.0px;height:48.0px;background:#fff;border:1.5px solid #c3c4c7;border-top:none;border-radius:0 0 5px 5px;box-sizing:border-box"></div>
<div class="t" style="left:2529.0px;top:448.2px;font-size:23px;color:#646970;letter-spacing:0.09px;">Ekraaniseaded</div>
<svg class="r" style="left:2697.0px;top:454.0px;" width="14" height="11" viewBox="0 0 14 11"><path d="M0 0 H14 L7 10Z" fill="#50575e"/></svg>
<div class="r" style="left:2749.0px;top:436.0px;width:155.0px;height:48.0px;background:#fff;border:1.5px solid #c3c4c7;border-top:none;border-radius:0 0 5px 5px;box-sizing:border-box"></div>
<div class="t" style="left:2777.0px;top:448.2px;font-size:23px;color:#646970;letter-spacing:0.53px;">Abiinfo</div>
<svg class="r" style="left:2864.0px;top:454.0px;" width="14" height="11" viewBox="0 0 14 11"><path d="M0 0 H14 L7 10Z" fill="#50575e"/></svg>
<div class="t" style="left:308.0px;top:459.4px;font-size:40px;color:#1d2327;letter-spacing:-0.83px;">Tellimused</div>
<div class="r" style="left:505.5px;top:451.5px;width:210.5px;height:50.0px;background:#f6f7f7;border:1.7px solid #3a55d8;border-radius:5px;box-sizing:border-box"></div>
<div class="t" style="left:523.6px;top:465.0px;font-size:23.5px;color:#3a55d8;letter-spacing:0.07px;">Lisa uus tellimus</div>
<div class="t" style="left:310.3px;top:535.0px;font-size:22.5px;color:#1d2327;font-weight:700;-webkit-text-stroke:0.1px currentColor;letter-spacing:-0.62px;">Kõik</div>
<div class="t" style="left:364.8px;top:534.5px;font-size:23.5px;color:#646970;letter-spacing:-1.15px;">(77,101)</div>
<div class="t" style="left:455.0px;top:535.2px;font-size:22px;color:#646970;">|</div>
<div class="t" style="left:471.7px;top:534.5px;font-size:23.5px;color:#3a55d8;letter-spacing:0.32px;">Minu</div>
<div class="t" style="left:530.7px;top:534.5px;font-size:23.5px;color:#646970;letter-spacing:-0.09px;">(196)</div>
<div class="t" style="left:596.0px;top:535.2px;font-size:22px;color:#646970;">|</div>
<div class="t" style="left:613.0px;top:534.5px;font-size:23.5px;color:#3a55d8;letter-spacing:0.16px;">Prügi</div>
<div class="t" style="left:676.0px;top:534.5px;font-size:23.5px;color:#646970;letter-spacing:-0.10px;">(79)</div>
<div class="t" style="left:728.0px;top:535.2px;font-size:22px;color:#646970;">|</div>
<div class="t" style="left:746.5px;top:534.5px;font-size:23.5px;color:#3a55d8;letter-spacing:0.20px;">Tellimus koostatud</div>
<div class="t" style="left:949.8px;top:534.5px;font-size:23.5px;color:#646970;letter-spacing:0.73px;">(3)</div>
<div class="t" style="left:990.0px;top:535.2px;font-size:22px;color:#646970;">|</div>
<div class="t" style="left:1007.0px;top:534.5px;font-size:23.5px;color:#3a55d8;letter-spacing:0.20px;">Makstud</div>
<div class="t" style="left:1104.6px;top:534.5px;font-size:23.5px;color:#646970;letter-spacing:0.50px;">(60)</div>
<div class="t" style="left:1159.0px;top:535.2px;font-size:22px;color:#646970;">|</div>
<div class="t" style="left:1176.0px;top:534.5px;font-size:23.5px;color:#3a55d8;letter-spacing:0.05px;">Ootab makset</div>
<div class="t" style="left:1330.0px;top:534.5px;font-size:23.5px;color:#646970;letter-spacing:0.50px;">(24)</div>
<div class="t" style="left:1383.5px;top:535.2px;font-size:22px;color:#646970;">|</div>
<div class="t" style="left:1401.0px;top:534.5px;font-size:23.5px;color:#3a55d8;letter-spacing:0.03px;">Täidetud poes</div>
<div class="t" style="left:1557.0px;top:534.5px;font-size:23.5px;color:#646970;letter-spacing:0.68px;">(60,888)</div>
<div class="t" style="left:1659.5px;top:535.2px;font-size:22px;color:#646970;">|</div>
<div class="t" style="left:1677.0px;top:534.5px;font-size:23.5px;color:#3a55d8;letter-spacing:0.20px;">Tühistatud</div>
<div class="t" style="left:1794.7px;top:534.5px;font-size:23.5px;color:#646970;letter-spacing:0.88px;">(5)</div>
<div class="t" style="left:1835.5px;top:535.2px;font-size:22px;color:#646970;">|</div>
<div class="t" style="left:1853.0px;top:534.5px;font-size:23.5px;color:#3a55d8;letter-spacing:-0.01px;">Tagasi makstud</div>
<div class="t" style="left:2023.0px;top:534.5px;font-size:23.5px;color:#646970;letter-spacing:-0.77px;">(12)</div>
<div class="t" style="left:2073.5px;top:535.2px;font-size:22px;color:#646970;">|</div>
<div class="t" style="left:2090.0px;top:534.5px;font-size:23.5px;color:#3a55d8;letter-spacing:0.07px;">Ebaõnnestunud</div>
<div class="t" style="left:2262.0px;top:534.5px;font-size:23.5px;color:#646970;letter-spacing:-1.37px;">(1)</div>
<div class="t" style="left:2298.0px;top:535.2px;font-size:22px;color:#646970;">|</div>
<div class="t" style="left:2314.0px;top:534.5px;font-size:23.5px;color:#3a55d8;letter-spacing:0.01px;">Pakkumine</div>
<div class="t" style="left:2436.6px;top:534.5px;font-size:23.5px;color:#646970;letter-spacing:0.57px;">(22)</div>
<div class="t" style="left:2489.5px;top:535.2px;font-size:22px;color:#646970;">|</div>
<div class="t" style="left:2506.4px;top:534.5px;font-size:23.5px;color:#3a55d8;letter-spacing:0.05px;">Kaup üle antud</div>
<div class="t" style="left:2665.0px;top:534.5px;font-size:23.5px;color:#646970;letter-spacing:0.18px;">(16,086)</div>
<div class="r" style="left:2343.0px;top:584.0px;width:333.0px;height:51.0px;background:#fff;border:1.5px solid #d0d1d4;border-radius:5px;box-sizing:border-box"></div>
<div class="r" style="left:2697.0px;top:584.0px;width:209.0px;height:51.0px;background:#f6f7f7;border:1.7px solid #3a55d8;border-radius:5px;box-sizing:border-box"></div>
<div class="t" style="left:2716.7px;top:598.0px;font-size:23.5px;color:#3a55d8;letter-spacing:0.29px;">Otsi tellimustest</div>
<div class="r" style="left:308.0px;top:664.0px;width:339.0px;height:53.0px;background:#fff;border:1.5px solid #8c8f94;border-radius:5px;box-sizing:border-box"></div>
<div class="t" style="left:324.0px;top:678.5px;font-size:24.5px;color:#1d2327;letter-spacing:0.40px;">Bulk actions</div>
<svg class="r" style="left:611.0px;top:683.5px;" width="22" height="14" viewBox="0 0 22 14"><path d="M3 3 L11 11 L19 3" fill="none" stroke="#1d2327" stroke-width="2.6" stroke-linecap="round" stroke-linejoin="round"/></svg>
<div class="r" style="left:658.0px;top:664.0px;width:127.0px;height:53.0px;background:#f6f7f7;border:1.7px solid #3a55d8;border-radius:5px;box-sizing:border-box"></div>
<div class="t" style="left:677.0px;top:679.2px;font-size:23px;color:#3a55d8;letter-spacing:-0.15px;">Rakenda</div>
<div class="r" style="left:308.0px;top:720.0px;width:245.4px;height:52.0px;background:#fff;border:1.5px solid #8c8f94;border-radius:5px;box-sizing:border-box"></div>
<div class="t" style="left:324.0px;top:734.0px;font-size:24.5px;color:#1d2327;letter-spacing:0.13px;">Kõik kuupäevad</div>
<svg class="r" style="left:517.4px;top:739.0px;" width="22" height="14" viewBox="0 0 22 14"><path d="M3 3 L11 11 L19 3" fill="none" stroke="#1d2327" stroke-width="2.6" stroke-linecap="round" stroke-linejoin="round"/></svg>
<div class="r" style="left:566.5px;top:720.0px;width:270.8px;height:52.0px;background:#fff;border:1.5px solid #8c8f94;border-radius:5px;box-sizing:border-box"></div>
<div class="t" style="left:581.6px;top:734.0px;font-size:24.5px;color:#1d2327;letter-spacing:0.06px;">POS Maksemeetod</div>
<svg class="r" style="left:801.3px;top:739.0px;" width="22" height="14" viewBox="0 0 22 14"><path d="M3 3 L11 11 L19 3" fill="none" stroke="#1d2327" stroke-width="2.6" stroke-linecap="round" stroke-linejoin="round"/></svg>
<div class="r" style="left:850.4px;top:720.0px;width:178.6px;height:52.0px;background:#fff;border:1.5px solid #8c8f94;border-radius:5px;box-sizing:border-box"></div>
<div class="t" style="left:866.0px;top:734.0px;font-size:24.5px;color:#1d2327;letter-spacing:0.63px;">Müügikoht</div>
<svg class="r" style="left:993.0px;top:739.0px;" width="22" height="14" viewBox="0 0 22 14"><path d="M3 3 L11 11 L19 3" fill="none" stroke="#1d2327" stroke-width="2.6" stroke-linecap="round" stroke-linejoin="round"/></svg>
<div class="r" style="left:1040.5px;top:720.0px;width:407.0px;height:52.0px;background:#fff;border:1.5px solid #8c8f94;border-radius:5px;box-sizing:border-box"></div>
<div class="t" style="left:1056.7px;top:733.8px;font-size:25px;color:#646970;letter-spacing:0.22px;">Filtreeri registreeritud kliendi ...</div>
<svg class="r" style="left:1411.5px;top:739.0px;" width="22" height="14" viewBox="0 0 22 14"><path d="M3 3 L11 11 L19 3" fill="none" stroke="#1d2327" stroke-width="2.6" stroke-linecap="round" stroke-linejoin="round"/></svg>
<div class="r" style="left:1460.0px;top:720.0px;width:407.0px;height:52.0px;background:#fff;border:1.5px solid #8c8f94;border-radius:5px;box-sizing:border-box"></div>
<div class="t" style="left:1475.7px;top:733.8px;font-size:25px;color:#646970;letter-spacing:0.05px;">Show all Arve koostaja</div>
<svg class="r" style="left:1831.0px;top:739.0px;" width="22" height="14" viewBox="0 0 22 14"><path d="M3 3 L11 11 L19 3" fill="none" stroke="#1d2327" stroke-width="2.6" stroke-linecap="round" stroke-linejoin="round"/></svg>
<div class="r" style="left:1881.0px;top:720.0px;width:405.0px;height:52.0px;background:#fff;border:1.5px solid #8c8f94;border-radius:5px;box-sizing:border-box"></div>
<div class="t" style="left:1896.3px;top:733.8px;font-size:25px;color:#646970;letter-spacing:0.08px;">Show all Arve tunnus/ladu</div>
<svg class="r" style="left:2250.0px;top:739.0px;" width="22" height="14" viewBox="0 0 22 14"><path d="M3 3 L11 11 L19 3" fill="none" stroke="#1d2327" stroke-width="2.6" stroke-linecap="round" stroke-linejoin="round"/></svg>
<div class="r" style="left:2301.0px;top:720.0px;width:338.0px;height:52.0px;background:#fff;border:1.5px solid #8c8f94;border-radius:5px;box-sizing:border-box"></div>
<div class="t" style="left:2316.0px;top:733.8px;font-size:24.8px;color:#1d2327;letter-spacing:0.16px;">All Payment Methods</div>
<svg class="r" style="left:2603.0px;top:739.0px;" width="22" height="14" viewBox="0 0 22 14"><path d="M3 3 L11 11 L19 3" fill="none" stroke="#1d2327" stroke-width="2.6" stroke-linecap="round" stroke-linejoin="round"/></svg>
<div class="r" style="left:2650.0px;top:720.0px;width:91.0px;height:52.0px;background:#f6f7f7;border:1.7px solid #3a55d8;border-radius:5px;box-sizing:border-box"></div>
<div class="t" style="left:2669.5px;top:734.7px;font-size:23px;color:#3a55d8;letter-spacing:0.38px;">Filter</div>
<div class="r" style="left:2770.0px;top:720.0px;width:68.0px;height:52.0px;background:#f6f7f7;border:1.7px solid #3a55d8;border-radius:5px;box-sizing:border-box"></div>
<svg class="r" style="left:2792.5px;top:734.5px;" width="23" height="23" viewBox="0 0 30 30"><g fill="#3a55d8"><rect x="12.5" y="0" width="5" height="8" rx="1" transform="rotate(0 15 15)"/><rect x="12.5" y="0" width="5" height="8" rx="1" transform="rotate(45 15 15)"/><rect x="12.5" y="0" width="5" height="8" rx="1" transform="rotate(90 15 15)"/><rect x="12.5" y="0" width="5" height="8" rx="1" transform="rotate(135 15 15)"/><rect x="12.5" y="0" width="5" height="8" rx="1" transform="rotate(180 15 15)"/><rect x="12.5" y="0" width="5" height="8" rx="1" transform="rotate(225 15 15)"/><rect x="12.5" y="0" width="5" height="8" rx="1" transform="rotate(270 15 15)"/><rect x="12.5" y="0" width="5" height="8" rx="1" transform="rotate(315 15 15)"/><circle cx="15" cy="15" r="10"/></g><circle cx="15" cy="15" r="4.2" fill="#1e1e1e"/></svg>
<div class="r" style="left:2800.5px;top:742.5px;width:7.0px;height:7.0px;background:#f6f7f7;border-radius:50%"></div>
<div class="t" style="left:2304.6px;top:795.8px;font-size:22.8px;color:#464d54;letter-spacing:-0.05px;">77,101 elementi</div>
<div class="r" style="left:2485.0px;top:782.0px;width:48.6px;height:50.0px;background:#f6f7f7;border:1.5px solid #dcdcde;border-radius:5px;box-sizing:border-box"></div>
<div class="t" style="left:2502.0px;top:793.3px;font-size:26px;color:#a7aaad;">«</div>
<div class="r" style="left:2542.0px;top:782.0px;width:48.6px;height:50.0px;background:#f6f7f7;border:1.5px solid #dcdcde;border-radius:5px;box-sizing:border-box"></div>
<div class="t" style="left:2559.0px;top:793.3px;font-size:26px;color:#a7aaad;">‹</div>
<div class="r" style="left:2600.0px;top:782.0px;width:89.0px;height:50.0px;background:#fff;border:1.5px solid #8c8f94;border-radius:5px;box-sizing:border-box"></div>
<div class="t" style="left:2637.0px;top:795.7px;font-size:23px;color:#464d54;">1</div>
<div class="t" style="left:2699.0px;top:795.5px;font-size:23.4px;color:#464d54;letter-spacing:0.19px;">1,543 -st</div>
<div class="r" style="left:2799.0px;top:782.0px;width:49.0px;height:50.0px;background:#f6f7f7;border:1.7px solid #3a55d8;border-radius:5px;box-sizing:border-box"></div>
<div class="t" style="left:2816.0px;top:793.3px;font-size:26px;color:#3a55d8;">›</div>
<div class="r" style="left:2856.0px;top:782.0px;width:49.0px;height:50.0px;background:#f6f7f7;border:1.7px solid #3a55d8;border-radius:5px;box-sizing:border-box"></div>
<div class="t" style="left:2873.0px;top:793.3px;font-size:26px;color:#3a55d8;">»</div>
<div class="r" style="left:307.0px;top:849.0px;width:2598.0px;height:900.0px;background:#fff;border:1.5px solid #c3c4c7;box-sizing:border-box"></div>
<div class="r" style="left:308.5px;top:931.0px;width:2595.0px;height:1.5px;background:#c3c4c7"></div>
<div class="r" style="left:332.5px;top:877.5px;width:26.5px;height:26.5px;background:#fff;border:1.6px solid #8c8f94;border-radius:5px;box-sizing:border-box"></div>
<div class="t" style="left:388.0px;top:877.9px;font-size:24.6px;color:#3a55d8;letter-spacing:0.31px;">Tellimus</div>
<svg class="r" style="left:489.0px;top:875.0px;" width="14" height="30" viewBox="0 0 14 30"><path d="M7 2 L13 11 H1Z M7 28 L13 19 H1Z" fill="#a7aaad"/></svg>
<div class="t" style="left:780.0px;top:877.9px;font-size:24.6px;color:#3a55d8;letter-spacing:0.38px;">Arve tunnus</div>
<svg class="r" style="left:925.0px;top:875.0px;" width="14" height="30" viewBox="0 0 14 30"><path d="M7 2 L13 11 H1Z M7 28 L13 19 H1Z" fill="#a7aaad"/></svg>
<div class="t" style="left:1037.0px;top:877.9px;font-size:24.6px;color:#3a55d8;letter-spacing:0.16px;">Arve koostaja</div>
<svg class="r" style="left:1197.0px;top:875.0px;" width="14" height="30" viewBox="0 0 14 30"><path d="M7 2 L13 11 H1Z M7 28 L13 19 H1Z" fill="#a7aaad"/></svg>
<div class="t" style="left:1293.0px;top:877.9px;font-size:24.6px;color:#3a55d8;letter-spacing:0.07px;">Kuupäev</div>
<svg class="r" style="left:1400.0px;top:875.0px;" width="14" height="30" viewBox="0 0 14 30"><path d="M7 2 L13 11 H1Z M7 28 L13 19 H1Z" fill="#a7aaad"/></svg>
<div class="t" style="left:1515.6px;top:877.9px;font-size:24.6px;color:#1d2327;letter-spacing:0.37px;">User Login</div>
<div class="t" style="left:1772.6px;top:877.9px;font-size:24.6px;color:#1d2327;letter-spacing:0.40px;">Arveldus</div>
<svg class="r" style="left:2216.0px;top:875.0px;" width="14" height="30" viewBox="0 0 14 30"><path d="M7 2 L13 11 H1Z M7 28 L13 19 H1Z" fill="#a7aaad"/></svg>
<div class="t" style="left:2237.7px;top:877.9px;font-size:24.6px;color:#3a55d8;letter-spacing:0.11px;">Kokku</div>
<div class="t" style="left:2354.0px;top:877.9px;font-size:24.6px;color:#1d2327;letter-spacing:-0.03px;">Olek</div>
<div class="t" style="left:2644.4px;top:877.9px;font-size:24.6px;color:#3a55d8;letter-spacing:0.14px;">Kommentaar</div>
<svg class="r" style="left:2796.0px;top:875.0px;" width="14" height="30" viewBox="0 0 14 30"><path d="M7 2 L13 11 H1Z M7 28 L13 19 H1Z" fill="#a7aaad"/></svg>
<div class="r" style="left:308.5px;top:932.5px;width:2595.0px;height:148.5px;background:#f6f7f7"></div>
<div class="r" style="left:332.5px;top:993.0px;width:26.5px;height:26.5px;background:#fff;border:1.6px solid #8c8f94;border-radius:5px;box-sizing:border-box"></div>
<div class="t" style="left:388.0px;top:993.4px;font-size:24.7px;color:#3a55d8;font-weight:700;-webkit-text-stroke:0.1px currentColor;letter-spacing:0.31px;">#299155 Indrek Joosu</div>
<svg class="r" style="left:696.0px;top:998.5px;" width="26" height="14" viewBox="0 0 26 14"><path d="M1 8.5 Q13 -2 25 8.5" fill="none" stroke="#3a55d8" stroke-width="3" stroke-linecap="round"/><ellipse cx="13" cy="8" rx="5.5" ry="5" fill="#3a55d8"/></svg>
<div class="t" style="left:1293.0px;top:972.5px;font-size:25.5px;color:#464d54;letter-spacing:0.22px;">57 minutit</div>
<div class="t" style="left:1293.0px;top:1016.5px;font-size:25.5px;color:#464d54;letter-spacing:0.29px;">tagasi</div>
<div class="t" style="left:1515.6px;top:995.2px;font-size:24px;color:#464d54;">–</div>
<div class="t" style="left:1772.6px;top:960.6px;font-size:25.3px;color:#464d54;letter-spacing:0.07px;">Indrek Joosu, Tööstuse 28 -</div>
<div class="t" style="left:1772.6px;top:994.6px;font-size:25.3px;color:#464d54;letter-spacing:-0.48px;">14, 10411 Tallinn</div>
<div class="t" style="left:1772.6px;top:1029.7px;font-size:23px;color:#8c8f94;letter-spacing:0.15px;">Everypay kaudu</div>
<div class="t" style="left:1905px;width:400px;text-align:right;top:994.9px;font-size:24.6px;color:#464d54">948.45 €</div>
<div class="r" style="left:2354.0px;top:977.4px;width:142.6px;height:59.0px;background:#c6e1c6;border-radius:5px"></div>
<div class="t" style="left:2377.5px;top:994.7px;font-size:24.8px;color:#2c4a12;letter-spacing:0.46px;">Makstud</div>
<div class="r" style="left:332.5px;top:1126.0px;width:26.5px;height:26.5px;background:#fff;border:1.6px solid #8c8f94;border-radius:5px;box-sizing:border-box"></div>
<div class="t" style="left:388.0px;top:1126.9px;font-size:24.7px;color:#3a55d8;font-weight:700;-webkit-text-stroke:0.1px currentColor;letter-spacing:0.01px;">#299154 TLN JAEKLIENT</div>
<svg class="r" style="left:696.0px;top:1132.0px;" width="26" height="14" viewBox="0 0 26 14"><path d="M1 8.5 Q13 -2 25 8.5" fill="none" stroke="#3a55d8" stroke-width="3" stroke-linecap="round"/><ellipse cx="13" cy="8" rx="5.5" ry="5" fill="#3a55d8"/></svg>
<div class="t" style="left:1293.0px;top:1126.5px;font-size:25.5px;color:#464d54;letter-spacing:0.11px;">2 tundi tagasi</div>
<div class="t" style="left:1515.6px;top:1127.2px;font-size:24px;color:#464d54;">–</div>
<div class="t" style="left:1772.6px;top:1111.6px;font-size:25.3px;color:#464d54;letter-spacing:-0.48px;">TLN JAEKLIENT, Tallinn</div>
<div class="t" style="left:1772.6px;top:1146.4px;font-size:23px;color:#8c8f94;letter-spacing:0.16px;">Cash kaudu</div>
<div class="t" style="left:1905px;width:400px;text-align:right;top:1126.9px;font-size:24.6px;color:#464d54">45.80 €</div>
<div class="r" style="left:2354.0px;top:1110.5px;width:205.8px;height:59.0px;background:#c8d7e1;border-radius:5px"></div>
<div class="t" style="left:2377.5px;top:1127.8px;font-size:24.8px;color:#2e4453;letter-spacing:0.28px;">Täidetud poes</div>
<div class="r" style="left:308.5px;top:1196.6px;width:2595.0px;height:115.6px;background:#f6f7f7"></div>
<div class="r" style="left:332.5px;top:1241.6px;width:26.5px;height:26.5px;background:#fff;border:1.6px solid #8c8f94;border-radius:5px;box-sizing:border-box"></div>
<div class="t" style="left:388.0px;top:1242.5px;font-size:24.7px;color:#3a55d8;font-weight:700;-webkit-text-stroke:0.1px currentColor;letter-spacing:0.41px;">#299153 Tartu jaeklient</div>
<svg class="r" style="left:696.0px;top:1247.6px;" width="26" height="14" viewBox="0 0 26 14"><path d="M1 8.5 Q13 -2 25 8.5" fill="none" stroke="#3a55d8" stroke-width="3" stroke-linecap="round"/><ellipse cx="13" cy="8" rx="5.5" ry="5" fill="#3a55d8"/></svg>
<div class="t" style="left:1293.0px;top:1242.1px;font-size:25.5px;color:#464d54;letter-spacing:0.18px;">3 tundi tagasi</div>
<div class="t" style="left:1515.6px;top:1242.8px;font-size:24px;color:#464d54;">–</div>
<div class="t" style="left:1772.6px;top:1227.2px;font-size:25.3px;color:#464d54;letter-spacing:0.21px;">Tartu jaeklient, Tartu</div>
<div class="t" style="left:1772.6px;top:1262.0px;font-size:23px;color:#8c8f94;letter-spacing:0.25px;">Card kaudu</div>
<div class="t" style="left:1905px;width:400px;text-align:right;top:1242.5px;font-size:24.6px;color:#464d54">73.00 €</div>
<div class="r" style="left:2354.0px;top:1226.1px;width:205.8px;height:59.0px;background:#c8d7e1;border-radius:5px"></div>
<div class="t" style="left:2377.5px;top:1243.4px;font-size:24.8px;color:#2e4453;letter-spacing:0.28px;">Täidetud poes</div>
<div class="r" style="left:332.5px;top:1357.2px;width:26.5px;height:26.5px;background:#fff;border:1.6px solid #8c8f94;border-radius:5px;box-sizing:border-box"></div>
<div class="t" style="left:388.0px;top:1358.1px;font-size:24.7px;color:#3a55d8;font-weight:700;-webkit-text-stroke:0.1px currentColor;letter-spacing:0.01px;">#299152 TLN JAEKLIENT</div>
<svg class="r" style="left:696.0px;top:1363.2px;" width="26" height="14" viewBox="0 0 26 14"><path d="M1 8.5 Q13 -2 25 8.5" fill="none" stroke="#3a55d8" stroke-width="3" stroke-linecap="round"/><ellipse cx="13" cy="8" rx="5.5" ry="5" fill="#3a55d8"/></svg>
<div class="t" style="left:1293.0px;top:1357.7px;font-size:25.5px;color:#464d54;letter-spacing:0.18px;">3 tundi tagasi</div>
<div class="t" style="left:1515.6px;top:1358.4px;font-size:24px;color:#464d54;">–</div>
<div class="t" style="left:1772.6px;top:1342.8px;font-size:25.3px;color:#464d54;letter-spacing:-0.48px;">TLN JAEKLIENT, Tallinn</div>
<div class="t" style="left:1772.6px;top:1377.6px;font-size:23px;color:#8c8f94;letter-spacing:0.25px;">Card kaudu</div>
<div class="t" style="left:1905px;width:400px;text-align:right;top:1358.1px;font-size:24.6px;color:#464d54">14.13 €</div>
<div class="r" style="left:2354.0px;top:1341.7px;width:205.8px;height:59.0px;background:#c8d7e1;border-radius:5px"></div>
<div class="t" style="left:2377.5px;top:1359.0px;font-size:24.8px;color:#2e4453;letter-spacing:0.28px;">Täidetud poes</div>
<div class="r" style="left:308.5px;top:1427.8px;width:2595.0px;height:115.6px;background:#f6f7f7"></div>
<div class="r" style="left:332.5px;top:1472.8px;width:26.5px;height:26.5px;background:#fff;border:1.6px solid #8c8f94;border-radius:5px;box-sizing:border-box"></div>
<div class="t" style="left:388.0px;top:1473.7px;font-size:24.7px;color:#3a55d8;font-weight:700;-webkit-text-stroke:0.1px currentColor;letter-spacing:0.01px;">#299151 TLN JAEKLIENT</div>
<svg class="r" style="left:696.0px;top:1478.8px;" width="26" height="14" viewBox="0 0 26 14"><path d="M1 8.5 Q13 -2 25 8.5" fill="none" stroke="#3a55d8" stroke-width="3" stroke-linecap="round"/><ellipse cx="13" cy="8" rx="5.5" ry="5" fill="#3a55d8"/></svg>
<div class="t" style="left:1293.0px;top:1473.3px;font-size:25.5px;color:#464d54;letter-spacing:0.18px;">3 tundi tagasi</div>
<div class="t" style="left:1515.6px;top:1474.0px;font-size:24px;color:#464d54;">–</div>
<div class="t" style="left:1772.6px;top:1458.4px;font-size:25.3px;color:#464d54;letter-spacing:-0.48px;">TLN JAEKLIENT, Tallinn</div>
<div class="t" style="left:1772.6px;top:1493.2px;font-size:23px;color:#8c8f94;letter-spacing:0.16px;">Cash kaudu</div>
<div class="t" style="left:1905px;width:400px;text-align:right;top:1473.7px;font-size:24.6px;color:#464d54">379.00 €</div>
<div class="r" style="left:2354.0px;top:1457.3px;width:205.8px;height:59.0px;background:#c8d7e1;border-radius:5px"></div>
<div class="t" style="left:2377.5px;top:1474.6px;font-size:24.8px;color:#2e4453;letter-spacing:0.28px;">Täidetud poes</div>
<div class="r" style="left:332.5px;top:1588.4px;width:26.5px;height:26.5px;background:#fff;border:1.6px solid #8c8f94;border-radius:5px;box-sizing:border-box"></div>
<div class="t" style="left:388.0px;top:1589.3px;font-size:24.7px;color:#3a55d8;font-weight:700;-webkit-text-stroke:0.1px currentColor;letter-spacing:0.41px;">#299150 Tartu jaeklient</div>
<svg class="r" style="left:696.0px;top:1594.4px;" width="26" height="14" viewBox="0 0 26 14"><path d="M1 8.5 Q13 -2 25 8.5" fill="none" stroke="#3a55d8" stroke-width="3" stroke-linecap="round"/><ellipse cx="13" cy="8" rx="5.5" ry="5" fill="#3a55d8"/></svg>
<div class="t" style="left:1293.0px;top:1588.9px;font-size:25.5px;color:#464d54;letter-spacing:0.18px;">3 tundi tagasi</div>
<div class="t" style="left:1515.6px;top:1589.6px;font-size:24px;color:#464d54;">–</div>
<div class="t" style="left:1772.6px;top:1574.0px;font-size:25.3px;color:#464d54;letter-spacing:0.21px;">Tartu jaeklient, Tartu</div>
<div class="t" style="left:1772.6px;top:1608.8px;font-size:23px;color:#8c8f94;letter-spacing:0.25px;">Card kaudu</div>
<div class="t" style="left:1905px;width:400px;text-align:right;top:1589.3px;font-size:24.6px;color:#464d54">8.70 €</div>
<div class="r" style="left:2354.0px;top:1572.9px;width:205.8px;height:59.0px;background:#c8d7e1;border-radius:5px"></div>
<div class="t" style="left:2377.5px;top:1590.2px;font-size:24.8px;color:#2e4453;letter-spacing:0.28px;">Täidetud poes</div>
<div class="r" style="left:308.5px;top:1659.0px;width:2595.0px;height:115.6px;background:#f6f7f7"></div>
<div class="r" style="left:332.5px;top:1704.0px;width:26.5px;height:26.5px;background:#fff;border:1.6px solid #8c8f94;border-radius:5px;box-sizing:border-box"></div>
<div class="t" style="left:388.0px;top:1704.9px;font-size:24.7px;color:#3a55d8;font-weight:700;-webkit-text-stroke:0.1px currentColor;letter-spacing:0.41px;">#299149 Tartu jaeklient</div>
<svg class="r" style="left:696.0px;top:1710.0px;" width="26" height="14" viewBox="0 0 26 14"><path d="M1 8.5 Q13 -2 25 8.5" fill="none" stroke="#3a55d8" stroke-width="3" stroke-linecap="round"/><ellipse cx="13" cy="8" rx="5.5" ry="5" fill="#3a55d8"/></svg>
<div class="t" style="left:1293.0px;top:1704.5px;font-size:25.5px;color:#464d54;letter-spacing:0.18px;">4 tundi tagasi</div>
<div class="t" style="left:1515.6px;top:1705.2px;font-size:24px;color:#464d54;">–</div>
<div class="t" style="left:1772.6px;top:1689.6px;font-size:25.3px;color:#464d54;letter-spacing:0.21px;">Tartu jaeklient, Tartu</div>
<div class="t" style="left:1772.6px;top:1724.4px;font-size:23px;color:#8c8f94;letter-spacing:0.25px;">Card kaudu</div>
<div class="t" style="left:1905px;width:400px;text-align:right;top:1704.9px;font-size:24.6px;color:#464d54">28.00 €</div>
<div class="r" style="left:2354.0px;top:1688.5px;width:205.8px;height:59.0px;background:#c8d7e1;border-radius:5px"></div>
<div class="t" style="left:2377.5px;top:1705.8px;font-size:24.8px;color:#2e4453;letter-spacing:0.28px;">Täidetud poes</div>
<svg class="r" style="left:1708.0px;top:1056.0px;" width="352" height="30" viewBox="0 0 352 30"><path d="M14 6 Q4 6 4 15 Q4 24 14 24 L80 25 Q200 25 338 24 Q348 24 348 15 Q348 6 338 6 Q200 5 80 6 Z" fill="#e8182a"/></svg>
<div class="r" style="left:272.0px;top:1655.0px;width:2668.0px;height:68.0px;background:linear-gradient(180deg,rgba(0,0,0,0),rgba(0,0,0,0.08))"></div>
<div class="r" style="left:0.0px;top:1721.0px;width:2940.0px;height:4.0px;background:linear-gradient(180deg,rgba(0,0,0,0.15),rgba(0,0,0,0.7))"></div>
</div>
<div class="r" style="left:332.6px;top:1728.5px;width:2274.4px;height:173.5px;border-radius:32px;background:linear-gradient(90deg,#9d78a8 0%,#a589ab 22%,#ab8fb0 35%,#b590c2 50%,#bb90c4 68%,#b88cc0 73%,#c0a0b4 77.5%,#bcb8a0 81%,#b8bb9a 86%,#b4b896 100%);box-shadow:inset 0 0 0 1.5px rgba(255,255,255,0.25)"></div>
<svg class="r" style="left:355.5px;top:1752.0px;" width="116" height="116" viewBox="0 0 116 116"><defs><linearGradient id="fb" x1="0" y1="0" x2="0" y2="1"><stop offset="0" stop-color="#62c6fa"/><stop offset="1" stop-color="#2a70e4"/></linearGradient><linearGradient id="fw" x1="0" y1="0" x2="0" y2="1"><stop offset="0" stop-color="#f4f5f8"/><stop offset="1" stop-color="#dcdfe8"/></linearGradient><clipPath id="fc"><rect width="116" height="116" rx="26"/></clipPath></defs><g clip-path="url(#fc)"><rect width="116" height="116" fill="url(#fw)"/><path d="M0 0 H62 Q52 28 50 62 H66 Q64 92 70 116 H0Z" fill="url(#fb)"/></g><rect x="30" y="36" width="6" height="13" rx="3" fill="#1a1a2a"/><rect x="84" y="36" width="6" height="13" rx="3" fill="#1a1a2a"/><path d="M23 77 Q58 100 94 78" fill="none" stroke="#1a1a2a" stroke-width="3.2" stroke-linecap="round"/></svg>
<svg class="r" style="left:508.0px;top:1752.0px;" width="116" height="116" viewBox="0 0 116 116"><defs><linearGradient id="sg" x1="0" y1="0" x2="0" y2="1"><stop offset="0" stop-color="#e6e6e8"/><stop offset="1" stop-color="#a2a2a4"/></linearGradient></defs><rect width="116" height="116" rx="26" fill="url(#sg)"/><circle cx="58" cy="58" r="49" fill="#3c3c3e"/><g fill="#bdbdbd"><rect x="56.2" y="9" width="3.6" height="9" transform="rotate(0.0 58 58)"/><rect x="56.2" y="9" width="3.6" height="9" transform="rotate(7.5 58 58)"/><rect x="56.2" y="9" width="3.6" height="9" transform="rotate(15.0 58 58)"/><rect x="56.2" y="9" width="3.6" height="9" transform="rotate(22.5 58 58)"/><rect x="56.2" y="9" width="3.6" height="9" transform="rotate(30.0 58 58)"/><rect x="56.2" y="9" width="3.6" height="9" transform="rotate(37.5 58 58)"/><rect x="56.2" y="9" width="3.6" height="9" transform="rotate(45.0 58 58)"/><rect x="56.2" y="9" width="3.6" height="9" transform="rotate(52.5 58 58)"/><rect x="56.2" y="9" width="3.6" height="9" transform="rotate(60.0 58 58)"/><rect x="56.2" y="9" width="3.6" height="9" transform="rotate(67.5 58 58)"/><rect x="56.2" y="9" width="3.6" height="9" transform="rotate(75.0 58 58)"/><rect x="56.2" y="9" width="3.6" height="9" transform="rotate(82.5 58 58)"/><rect x="56.2" y="9" width="3.6" height="9" transform="rotate(90.0 58 58)"/><rect x="56.2" y="9" width="3.6" height="9" transform="rotate(97.5 58 58)"/><rect x="56.2" y="9" width="3.6" height="9" transform="rotate(105.0 58 58)"/><rect x="56.2" y="9" width="3.6" height="9" transform="rotate(112.5 58 58)"/><rect x="56.2" y="9" width="3.6" height="9" transform="rotate(120.0 58 58)"/><rect x="56.2" y="9" width="3.6" height="9" transform="rotate(127.5 58 58)"/><rect x="56.2" y="9" width="3.6" height="9" transform="rotate(135.0 58 58)"/><rect x="56.2" y="9" width="3.6" height="9" transform="rotate(142.5 58 58)"/><rect x="56.2" y="9" width="3.6" height="9" transform="rotate(150.0 58 58)"/><rect x="56.2" y="9" width="3.6" height="9" transform="rotate(157.5 58 58)"/><rect x="56.2" y="9" width="3.6" height="9" transform="rotate(165.0 58 58)"/><rect x="56.2" y="9" width="3.6" height="9" transform="rotate(172.5 58 58)"/><rect x="56.2" y="9" width="3.6" height="9" transform="rotate(180.0 58 58)"/><rect x="56.2" y="9" width="3.6" height="9" transform="rotate(187.5 58 58)"/><rect x="56.2" y="9" width="3.6" height="9" transform="rotate(195.0 58 58)"/><rect x="56.2" y="9" width="3.6" height="9" transform="rotate(202.5 58 58)"/><rect x="56.2" y="9" width="3.6" height="9" transform="rotate(210.0 58 58)"/><rect x="56.2" y="9" width="3.6" height="9" transform="rotate(217.5 58 58)"/><rect x="56.2" y="9" width="3.6" height="9" transform="rotate(225.0 58 58)"/><rect x="56.2" y="9" width="3.6" height="9" transform="rotate(232.5 58 58)"/><rect x="56.2" y="9" width="3.6" height="9" transform="rotate(240.0 58 58)"/><rect x="56.2" y="9" width="3.6" height="9" transform="rotate(247.5 58 58)"/><rect x="56.2" y="9" width="3.6" height="9" transform="rotate(255.0 58 58)"/><rect x="56.2" y="9" width="3.6" height="9" transform="rotate(262.5 58 58)"/><rect x="56.2" y="9" width="3.6" height="9" transform="rotate(270.0 58 58)"/><rect x="56.2" y="9" width="3.6" height="9" transform="rotate(277.5 58 58)"/><rect x="56.2" y="9" width="3.6" height="9" transform="rotate(285.0 58 58)"/><rect x="56.2" y="9" width="3.6" height="9" transform="rotate(292.5 58 58)"/><rect x="56.2" y="9" width="3.6" height="9" transform="rotate(300.0 58 58)"/><rect x="56.2" y="9" width="3.6" height="9" transform="rotate(307.5 58 58)"/><rect x="56.2" y="9" width="3.6" height="9" transform="rotate(315.0 58 58)"/><rect x="56.2" y="9" width="3.6" height="9" transform="rotate(322.5 58 58)"/><rect x="56.2" y="9" width="3.6" height="9" transform="rotate(330.0 58 58)"/><rect x="56.2" y="9" width="3.6" height="9" transform="rotate(337.5 58 58)"/><rect x="56.2" y="9" width="3.6" height="9" transform="rotate(345.0 58 58)"/><rect x="56.2" y="9" width="3.6" height="9" transform="rotate(352.5 58 58)"/></g><circle cx="58" cy="58" r="40" fill="#4a4a4c"/><circle cx="58" cy="58" r="36" fill="#b8b8ba"/><circle cx="58" cy="58" r="31" fill="#444"/><g fill="#8e8e90"><rect x="56.8" y="27" width="2.4" height="5" transform="rotate(0 58 58)"/><rect x="56.8" y="27" width="2.4" height="5" transform="rotate(10 58 58)"/><rect x="56.8" y="27" width="2.4" height="5" transform="rotate(20 58 58)"/><rect x="56.8" y="27" width="2.4" height="5" transform="rotate(30 58 58)"/><rect x="56.8" y="27" width="2.4" height="5" transform="rotate(40 58 58)"/><rect x="56.8" y="27" width="2.4" height="5" transform="rotate(50 58 58)"/><rect x="56.8" y="27" width="2.4" height="5" transform="rotate(60 58 58)"/><rect x="56.8" y="27" width="2.4" height="5" transform="rotate(70 58 58)"/><rect x="56.8" y="27" width="2.4" height="5" transform="rotate(80 58 58)"/><rect x="56.8" y="27" width="2.4" height="5" transform="rotate(90 58 58)"/><rect x="56.8" y="27" width="2.4" height="5" transform="rotate(100 58 58)"/><rect x="56.8" y="27" width="2.4" height="5" transform="rotate(110 58 58)"/><rect x="56.8" y="27" width="2.4" height="5" transform="rotate(120 58 58)"/><rect x="56.8" y="27" width="2.4" height="5" transform="rotate(130 58 58)"/><rect x="56.8" y="27" width="2.4" height="5" transform="rotate(140 58 58)"/><rect x="56.8" y="27" width="2.4" height="5" transform="rotate(150 58 58)"/><rect x="56.8" y="27" width="2.4" height="5" transform="rotate(160 58 58)"/><rect x="56.8" y="27" width="2.4" height="5" transform="rotate(170 58 58)"/><rect x="56.8" y="27" width="2.4" height="5" transform="rotate(180 58 58)"/><rect x="56.8" y="27" width="2.4" height="5" transform="rotate(190 58 58)"/><rect x="56.8" y="27" width="2.4" height="5" transform="rotate(200 58 58)"/><rect x="56.8" y="27" width="2.4" height="5" transform="rotate(210 58 58)"/><rect x="56.8" y="27" width="2.4" height="5" transform="rotate(220 58 58)"/><rect x="56.8" y="27" width="2.4" height="5" transform="rotate(230 58 58)"/><rect x="56.8" y="27" width="2.4" height="5" transform="rotate(240 58 58)"/><rect x="56.8" y="27" width="2.4" height="5" transform="rotate(250 58 58)"/><rect x="56.8" y="27" width="2.4" height="5" transform="rotate(260 58 58)"/><rect x="56.8" y="27" width="2.4" height="5" transform="rotate(270 58 58)"/><rect x="56.8" y="27" width="2.4" height="5" transform="rotate(280 58 58)"/><rect x="56.8" y="27" width="2.4" height="5" transform="rotate(290 58 58)"/><rect x="56.8" y="27" width="2.4" height="5" transform="rotate(300 58 58)"/><rect x="56.8" y="27" width="2.4" height="5" transform="rotate(310 58 58)"/><rect x="56.8" y="27" width="2.4" height="5" transform="rotate(320 58 58)"/><rect x="56.8" y="27" width="2.4" height="5" transform="rotate(330 58 58)"/><rect x="56.8" y="27" width="2.4" height="5" transform="rotate(340 58 58)"/><rect x="56.8" y="27" width="2.4" height="5" transform="rotate(350 58 58)"/></g><circle cx="58" cy="58" r="25" fill="#6a6a6c"/><path d="M58 58 L88.0 58.0 M58 58 L43.0 84.0 M58 58 L43.0 32.0 " stroke="#c8c8ca" stroke-width="5.5" stroke-linecap="round"/><circle cx="58" cy="58" r="4" fill="#d0d0d2"/></svg>
<svg class="r" style="left:660.0px;top:1752.0px;" width="116" height="116" viewBox="0 0 116 116"><defs><radialGradient id="ffo" cx="30%" cy="90%" r="95%"><stop offset="0" stop-color="#ff2a6a"/><stop offset=".45" stop-color="#ff6a2a"/><stop offset=".8" stop-color="#ffb02e"/><stop offset="1" stop-color="#ffe04a"/></radialGradient><radialGradient id="ffp" cx="35%" cy="25%" r="80%"><stop offset="0" stop-color="#c070f0"/><stop offset="1" stop-color="#5a30d0"/></radialGradient><linearGradient id="ffy" x1="0" y1="0" x2="0" y2="1"><stop offset="0" stop-color="#ffe45a"/><stop offset="1" stop-color="#ffa030"/></linearGradient></defs><rect width="116" height="116" rx="26" fill="#20123a"/><path d="M58 108 A44 44 0 0 1 16 60 Q18 44 28 34 L34 44 Q40 36 48 38 Q60 26 70 14 Q78 4 76 16 Q96 30 102 58 A44 44 0 0 1 58 108Z" fill="url(#ffo)"/><path d="M70 12 Q98 26 102 60 Q100 90 80 100 Q96 80 90 56 Q86 36 66 28 Z" fill="url(#ffy)" opacity=".9"/><circle cx="60" cy="62" r="21" fill="url(#ffp)"/><path d="M24 50 Q34 40 48 44 Q40 50 36 58 Q30 54 24 50Z" fill="#ffb43a"/></svg>
<svg class="r" style="left:811.6px;top:1752.0px;" width="116" height="116" viewBox="0 0 116 116"><defs><linearGradient id="sfg" x1="0" y1="0" x2="0" y2="1"><stop offset="0" stop-color="#fff"/><stop offset="1" stop-color="#e6e6e6"/></linearGradient><linearGradient id="sfb" x1="0" y1="0" x2="0" y2="1"><stop offset="0" stop-color="#3ab4f8"/><stop offset="1" stop-color="#1a6ee0"/></linearGradient></defs><rect width="116" height="116" rx="26" fill="url(#sfg)"/><circle cx="58" cy="58" r="50" fill="url(#sfb)"/><circle cx="58" cy="58" r="44" fill="none" stroke="#fff" stroke-width="5" stroke-dasharray="1 3.6" opacity=".85"/><path d="M92 24 L64 64 L52 52Z" fill="#ff3b30"/><path d="M24 92 L52 52 L64 64Z" fill="#fff"/></svg>
<svg class="r" style="left:964.0px;top:1752.0px;" width="116" height="116" viewBox="0 0 116 116"><defs><clipPath id="cc"><rect width="116" height="116" rx="26"/></clipPath></defs><g clip-path="url(#cc)"><rect width="116" height="116" fill="#fbfbfb"/><rect width="116" height="34" fill="#e8534a"/></g><text x="58" y="27" font-size="23" font-weight="700" text-anchor="middle" font-family="Liberation Sans" fill="#fff">APR</text><text x="58" y="100" font-size="64" text-anchor="middle" font-family="Liberation Sans" fill="#2a2a2a">4</text></svg>
<svg class="r" style="left:1115.0px;top:1752.0px;" width="116" height="116" viewBox="0 0 116 116"><defs><linearGradient id="ng" x1="0" y1="0" x2="0" y2="1"><stop offset="0" stop-color="#6ddc5a"/><stop offset="1" stop-color="#2aa83a"/></linearGradient></defs><rect width="116" height="116" rx="26" fill="url(#ng)"/><g fill="#f4f4f4"><rect x="22" y="72" width="12" height="26" rx="2"/><rect x="40" y="54" width="12" height="44" rx="2"/><rect x="60" y="16" width="12" height="82" rx="2"/><rect x="80" y="42" width="12" height="56" rx="2"/></g></svg>
<svg class="r" style="left:1268.0px;top:1752.0px;" width="116" height="116" viewBox="0 0 116 116"><defs><linearGradient id="kg" x1="0" y1="0" x2="0" y2="1"><stop offset="0" stop-color="#d4d4d4"/><stop offset="1" stop-color="#a8a8a8"/></linearGradient></defs><rect width="116" height="116" rx="26" fill="url(#kg)"/><rect x="24" y="14" width="68" height="90" rx="10" fill="#2a2a2a"/><rect x="30" y="20" width="56" height="18" rx="3" fill="#444"/><g fill="#e0e0e0"><circle cx="38" cy="52" r="5"/><circle cx="56" cy="52" r="5"/><circle cx="38" cy="70" r="5"/><circle cx="56" cy="70" r="5"/><rect x="30" y="82" width="32" height="10" rx="5"/></g><g fill="#f39a2b"><circle cx="76" cy="52" r="5"/><circle cx="76" cy="70" r="5"/><circle cx="76" cy="88" r="5"/></g></svg>
<div class="r" style="left:1436.5px;top:1752.0px;width:1.6px;height:116.0px;background:rgba(60,40,70,0.45)"></div>
<svg class="r" style="left:1487.0px;top:1752.0px;" width="116" height="116" viewBox="0 0 116 116"><rect x="2" y="2" width="112" height="112" rx="24" fill="#001e36"/><text x="58" y="80" font-size="56" font-weight="700" text-anchor="middle" font-family="Liberation Sans" fill="#31a8ff">Ps</text></svg>
<svg class="r" style="left:1635.0px;top:1740.0px;" width="126" height="140" viewBox="0 0 126 140"><defs><linearGradient id="vo" x1="0" y1="0" x2="1" y2="0"><stop offset="0" stop-color="#f7a030"/><stop offset="1" stop-color="#e8801a"/></linearGradient></defs><path d="M4 132 L26 102 H100 L122 132 Z" fill="#f29a2e"/><path d="M28 108 Q63 124 98 108 L98 104 H28Z" fill="#e07818"/><path d="M52 6 Q63 0 74 6 L100 106 Q63 122 26 106 Z" fill="url(#vo)"/><path d="M45 34 Q63 42 81 34 L88 60 Q63 70 38 60 Z" fill="#f4f4f4"/><path d="M34 78 Q63 88 92 78 L96 92 Q63 104 30 92Z" fill="#f4f4f4" opacity=".0"/></svg>
<svg class="r" style="left:1791.0px;top:1752.0px;" width="130" height="126" viewBox="0 0 130 126"><defs><linearGradient id="pv" x1="0" y1="0" x2="0" y2="1"><stop offset="0" stop-color="#8eb0e6"/><stop offset=".5" stop-color="#b4c8ea"/><stop offset=".56" stop-color="#3a5a80"/><stop offset=".75" stop-color="#4a6a8a"/><stop offset="1" stop-color="#d8d8e0"/></linearGradient><linearGradient id="lp" x1="0" y1="0" x2="0" y2="1"><stop offset="0" stop-color="#e8e8ee" stop-opacity=".9"/><stop offset="1" stop-color="#9a9aa6" stop-opacity=".95"/></linearGradient></defs><rect x="1" y="1" width="114" height="114" rx="24" fill="#f2f2f4"/><rect x="10" y="10" width="96" height="96" rx="16" fill="url(#pv)"/><path d="M10 78 Q30 70 50 84 Q60 92 52 106 H26 Q10 106 10 90Z" fill="#e6e6ee"/><path d="M72 70 Q72 62 96 62 Q120 62 120 70 L116 84 H76Z" fill="#1c1c1e"/><path d="M70 84 H122 Q128 120 98 122 Q64 122 70 84Z" fill="url(#lp)"/><ellipse cx="96" cy="100" rx="12" ry="8" fill="#7a7a86" opacity=".6"/></svg>
<div class="r" style="left:1960.5px;top:1752.0px;width:1.6px;height:116.0px;background:rgba(60,40,70,0.45)"></div>
<svg class="r" style="left:2014.0px;top:1753.0px;" width="112" height="124" viewBox="0 0 112 124"><defs><linearGradient id="zg" x1="0" y1="0" x2="0" y2="1"><stop offset="0" stop-color="#fafafa"/><stop offset="1" stop-color="#ececec"/></linearGradient></defs><rect x="1.5" y="11" width="109" height="74" fill="#f6f6f6" stroke="#e0e0e0" stroke-width="1"/><path d="M11 2 H66 L99 35 V120 Q99 122 97 122 H13 Q11 122 11 120 Z" fill="url(#zg)" stroke="#dcdcdc" stroke-width="1"/><path d="M66 2 V31 Q66 35 70 35 H99" fill="#e2e2e2"/><rect x="70" y="7" width="29" height="5" fill="#111"/><rect x="48" y="3" width="18" height="68" rx="6" fill="#3a3a3a"/><path d="M51 6 V66 M63 6 V66" stroke="#bdbdbd" stroke-width="2.4" stroke-dasharray="2.2 2.4"/><rect x="52" y="36" width="10" height="16" rx="3" fill="#9a9a9a"/><text x="56" y="113" font-size="21" text-anchor="middle" font-family="Liberation Sans" fill="#6a6a6a">ZIP</text></svg>
<svg class="r" style="left:2154.0px;top:1773.0px;" width="136" height="102" viewBox="0 0 136 102"><rect width="135" height="74" fill="#1e1e1e"/><rect x="4" y="12" width="8" height="4" fill="#3a6ad0"/><rect x="4" y="22" width="20" height="2" fill="#555"/><g fill="#d8d8d8"><rect x="30" y="25" width="17" height="12"/><rect x="50" y="25" width="17" height="12"/><rect x="70" y="25" width="17" height="12" fill="#7a8a9a"/><rect x="90" y="25" width="14" height="12" fill="#b08070"/><rect x="110" y="25" width="17" height="12" fill="#7a8a9a"/><rect x="30" y="51" width="17" height="15"/><rect x="52" y="51" width="6" height="15"/><rect x="70" y="51" width="17" height="15"/></g><g fill="#1e1e1e"><path d="M32 64 L36 53 L39 60 L42 53 L45 64Z"/><path d="M72 64 L76 53 L79 60 L82 53 L85 64Z"/></g><rect x="88" y="57" width="46" height="45" rx="9" fill="#001e36"/><text x="111" y="89" font-size="25" font-weight="700" text-anchor="middle" font-family="Liberation Sans" fill="#31a8ff">Ps</text></svg>
<svg class="r" style="left:2305.0px;top:1771.0px;" width="138" height="106" viewBox="0 0 138 106"><rect x="0" y="0" width="136" height="76" fill="#4a5366"/><rect width="136" height="10" fill="#ece6e6"/><rect x="0" y="10" width="136" height="4" fill="#3a4356"/><text x="3" y="33" font-size="12.5" font-weight="700" font-family="Liberation Sans" fill="#fff" letter-spacing="-0.6">OPENING</text><text x="3" y="44" font-size="12.5" font-weight="700" font-family="Liberation Sans" fill="#fff" letter-spacing="-0.6">MORE</text><text x="3" y="55" font-size="12.5" font-weight="700" font-family="Liberation Sans" fill="#fff" letter-spacing="-0.6">DOORS</text><path d="M70 60 L92 30 L130 40 L126 70 L90 74Z" fill="#2a3446"/><ellipse cx="100" cy="50" rx="14" ry="10" fill="#8a94a8"/><rect x="0" y="70" width="34" height="5" fill="#7a4ae0"/><rect x="89" y="60" width="46" height="45" rx="10" fill="#f2f2f2"/><circle cx="112" cy="82.5" r="18" fill="#2a84ee"/><circle cx="112" cy="82.5" r="15" fill="none" stroke="#fff" stroke-width="2" stroke-dasharray="0.6 2" opacity=".7"/><path d="M124 70 L114 85 L110 80Z" fill="#ff3b30"/><path d="M100 95 L110 80 L114 85Z" fill="#fff"/></svg>
<svg class="r" style="left:2472.0px;top:1738.0px;" width="108" height="140" viewBox="0 0 108 140"><defs><linearGradient id="tg" x1="0" y1="0" x2="1" y2="0"><stop offset="0" stop-color="#d6d8d4"/><stop offset=".45" stop-color="#f2f2f0"/><stop offset="1" stop-color="#cfd1cc"/></linearGradient></defs><path d="M6 24 L18 130 Q20 137 32 137 H76 Q88 137 90 130 L102 24Z" fill="url(#tg)" opacity=".93"/><path d="M4 22 Q54 34 104 22 L103 30 Q54 42 5 30Z" fill="#e8e8e6"/><path d="M12 26 Q14 10 28 12 Q34 2 46 8 Q52 0 64 6 Q74 0 84 12 Q98 12 96 28 Q54 38 12 26Z" fill="#d8dade"/><path d="M22 22 L36 10 L44 24Z M50 20 L58 6 L70 22Z M72 24 L84 12 L90 26Z" fill="#6a7a9a"/><path d="M36 24 L46 12 L52 26Z" fill="#c04040" opacity=".5"/><path d="M30 50 V120 M54 50 V125 M78 50 V120" stroke="#ffffff" stroke-width="3" opacity=".35"/></svg>
<div class="r" style="left:409.0px;top:1890.0px;width:8.0px;height:8.0px;background:#222;border-radius:50%"></div>
<div class="r" style="left:714.0px;top:1890.0px;width:8.0px;height:8.0px;background:#222;border-radius:50%"></div>
<div class="r" style="left:866.0px;top:1890.0px;width:8.0px;height:8.0px;background:#222;border-radius:50%"></div>
<div class="r" style="left:1541.0px;top:1890.0px;width:8.0px;height:8.0px;background:#222;border-radius:50%"></div>
<div class="r" style="left:1693.0px;top:1890.0px;width:8.0px;height:8.0px;background:#222;border-radius:50%"></div>
</div></body></html>
